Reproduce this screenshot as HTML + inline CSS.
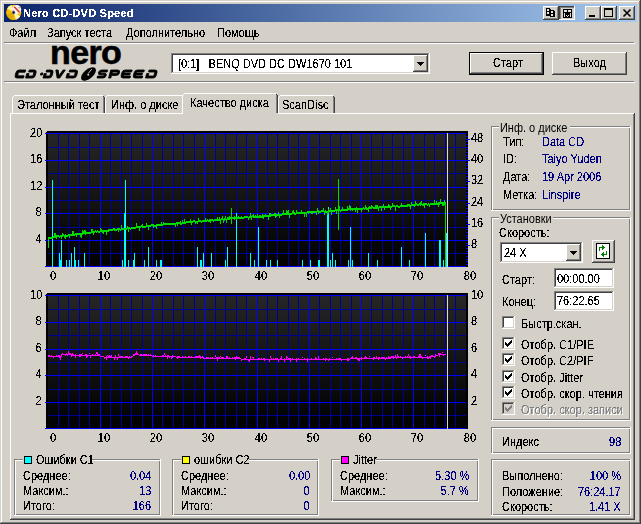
<!DOCTYPE html><html><head><meta charset="utf-8"><style>
html,body{margin:0;padding:0;}
body{width:641px;height:524px;position:relative;overflow:hidden;background:#D4D0C8;font-family:"Liberation Sans", sans-serif;}
div{position:absolute;}
.t{font-size:12px;line-height:13px;white-space:nowrap;color:#000;transform:scaleX(0.917);transform-origin:0 0;}
.r{transform-origin:100% 0;}
.c{transform-origin:50% 0;}
.n{font-size:11px;transform:none;}
.t{filter:url(#crisp);}
svg{position:absolute;left:0;top:0;}
</style></head><body>
<svg width="0" height="0" style="position:absolute;left:0;top:0"><filter id="crisp" x="0" y="0" width="100%" height="100%"><feComponentTransfer><feFuncA type="discrete" tableValues="0 0 1 1 1"/></feComponentTransfer></filter></svg>
<div style="position:absolute;left:1px;top:1px;width:639px;height:1px;background:#FFFFFF"></div>
<div style="position:absolute;left:1px;top:1px;width:1px;height:522px;background:#FFFFFF"></div>
<div style="position:absolute;left:0px;top:523px;width:641px;height:1px;background:#404040"></div>
<div style="position:absolute;left:640px;top:0px;width:1px;height:524px;background:#404040"></div>
<div style="position:absolute;left:1px;top:522px;width:639px;height:1px;background:#808080"></div>
<div style="position:absolute;left:639px;top:1px;width:1px;height:522px;background:#808080"></div>
<div style="position:absolute;left:4px;top:4px;width:633px;height:18px;background:linear-gradient(to right,#0A246A,#A6CAF0)"></div>
<div class="t n" style="left:23px;top:7px;color:#FFFFFF;font-weight:bold;letter-spacing:0.22px;">Nero CD-DVD Speed</div>
<div class="t" style="left:8.5px;top:27px;color:#000;">Файл</div>
<div class="t" style="left:46.5px;top:27px;color:#000;">Запуск теста</div>
<div class="t" style="left:126px;top:27px;color:#000;">Дополнительно</div>
<div class="t" style="left:217px;top:27px;color:#000;">Помощь</div>
<div style="position:absolute;left:4px;top:42px;width:630px;height:1px;background:#808080"></div>
<div style="position:absolute;left:5px;top:43px;width:630px;height:1px;background:#FFFFFF"></div>
<div style="position:absolute;left:4px;top:81px;width:630px;height:1px;background:#808080"></div>
<div style="position:absolute;left:5px;top:82px;width:630px;height:1px;background:#FFFFFF"></div>
<div style="position:absolute;left:171px;top:53px;width:259px;height:21px;background:#FFFFFF"></div>
<div style="position:absolute;left:171px;top:53px;width:259px;height:1px;background:#808080"></div>
<div style="position:absolute;left:171px;top:53px;width:1px;height:21px;background:#808080"></div>
<div style="position:absolute;left:171px;top:73px;width:259px;height:1px;background:#FFFFFF"></div>
<div style="position:absolute;left:429px;top:53px;width:1px;height:21px;background:#FFFFFF"></div>
<div style="position:absolute;left:172px;top:54px;width:257px;height:1px;background:#404040"></div>
<div style="position:absolute;left:172px;top:54px;width:1px;height:19px;background:#404040"></div>
<div style="position:absolute;left:172px;top:72px;width:257px;height:1px;background:#D4D0C8"></div>
<div style="position:absolute;left:428px;top:54px;width:1px;height:19px;background:#D4D0C8"></div>
<div class="t" style="left:178px;top:58px;color:#000;">[0:1]&nbsp;&nbsp;&nbsp;BENQ DVD DC DW1670 101</div>
<div style="position:absolute;left:413px;top:55px;width:15px;height:17px;background:#D4D0C8"></div>
<div style="position:absolute;left:413px;top:55px;width:15px;height:1px;background:#FFFFFF"></div>
<div style="position:absolute;left:413px;top:55px;width:1px;height:17px;background:#FFFFFF"></div>
<div style="position:absolute;left:413px;top:71px;width:15px;height:1px;background:#404040"></div>
<div style="position:absolute;left:427px;top:55px;width:1px;height:17px;background:#404040"></div>
<div style="position:absolute;left:414px;top:70px;width:13px;height:1px;background:#808080"></div>
<div style="position:absolute;left:426px;top:56px;width:1px;height:15px;background:#808080"></div>
<div style="position:absolute;left:469px;top:52px;width:75px;height:23px;background:#000"></div>
<div style="position:absolute;left:470px;top:53px;width:73px;height:21px;background:#D4D0C8"></div>
<div style="position:absolute;left:470px;top:53px;width:73px;height:1px;background:#FFFFFF"></div>
<div style="position:absolute;left:470px;top:53px;width:1px;height:21px;background:#FFFFFF"></div>
<div style="position:absolute;left:470px;top:73px;width:73px;height:1px;background:#404040"></div>
<div style="position:absolute;left:542px;top:53px;width:1px;height:21px;background:#404040"></div>
<div style="position:absolute;left:471px;top:72px;width:71px;height:1px;background:#808080"></div>
<div style="position:absolute;left:541px;top:54px;width:1px;height:19px;background:#808080"></div>
<div class="t" style="left:493px;top:57px;color:#000;">Старт</div>
<div style="position:absolute;left:552px;top:52px;width:75px;height:23px;background:#D4D0C8"></div>
<div style="position:absolute;left:552px;top:52px;width:75px;height:1px;background:#FFFFFF"></div>
<div style="position:absolute;left:552px;top:52px;width:1px;height:23px;background:#FFFFFF"></div>
<div style="position:absolute;left:552px;top:74px;width:75px;height:1px;background:#404040"></div>
<div style="position:absolute;left:626px;top:52px;width:1px;height:23px;background:#404040"></div>
<div style="position:absolute;left:553px;top:73px;width:73px;height:1px;background:#808080"></div>
<div style="position:absolute;left:625px;top:53px;width:1px;height:21px;background:#808080"></div>
<div class="t" style="left:573px;top:57px;color:#000;">Выход</div>
<div style="position:absolute;left:10px;top:113px;width:624px;height:1px;background:#FFFFFF"></div>
<div style="position:absolute;left:10px;top:113px;width:1px;height:406px;background:#FFFFFF"></div>
<div style="position:absolute;left:10px;top:519px;width:625px;height:1px;background:#404040"></div>
<div style="position:absolute;left:634px;top:113px;width:1px;height:407px;background:#404040"></div>
<div style="position:absolute;left:11px;top:518px;width:623px;height:1px;background:#808080"></div>
<div style="position:absolute;left:633px;top:114px;width:1px;height:405px;background:#808080"></div>
<div style="position:absolute;left:12px;top:95px;width:93px;height:18px;background:#D4D0C8"></div>
<div style="position:absolute;left:12px;top:97px;width:1px;height:17px;background:#FFFFFF"></div>
<div style="position:absolute;left:14px;top:95px;width:89px;height:1px;background:#FFFFFF"></div>
<div style="position:absolute;left:13px;top:96px;width:1px;height:1px;background:#FFFFFF"></div>
<div style="position:absolute;left:103px;top:96px;width:1px;height:17px;background:#808080"></div>
<div style="position:absolute;left:104px;top:97px;width:1px;height:16px;background:#404040"></div>
<div style="position:absolute;left:103px;top:96px;width:1px;height:1px;background:#404040"></div>
<div class="t" style="left:17px;top:99px;color:#000;">Эталонный тест</div>
<div style="position:absolute;left:105px;top:95px;width:79px;height:18px;background:#D4D0C8"></div>
<div style="position:absolute;left:105px;top:97px;width:1px;height:17px;background:#FFFFFF"></div>
<div style="position:absolute;left:107px;top:95px;width:75px;height:1px;background:#FFFFFF"></div>
<div style="position:absolute;left:106px;top:96px;width:1px;height:1px;background:#FFFFFF"></div>
<div style="position:absolute;left:182px;top:96px;width:1px;height:17px;background:#808080"></div>
<div style="position:absolute;left:183px;top:97px;width:1px;height:16px;background:#404040"></div>
<div style="position:absolute;left:182px;top:96px;width:1px;height:1px;background:#404040"></div>
<div class="t" style="left:111px;top:99px;color:#000;">Инф. о диске</div>
<div style="position:absolute;left:278px;top:95px;width:57px;height:18px;background:#D4D0C8"></div>
<div style="position:absolute;left:278px;top:97px;width:1px;height:17px;background:#FFFFFF"></div>
<div style="position:absolute;left:280px;top:95px;width:53px;height:1px;background:#FFFFFF"></div>
<div style="position:absolute;left:279px;top:96px;width:1px;height:1px;background:#FFFFFF"></div>
<div style="position:absolute;left:333px;top:96px;width:1px;height:17px;background:#808080"></div>
<div style="position:absolute;left:334px;top:97px;width:1px;height:16px;background:#404040"></div>
<div style="position:absolute;left:333px;top:96px;width:1px;height:1px;background:#404040"></div>
<div class="t" style="left:282px;top:99px;color:#000;">ScanDisc</div>
<div style="position:absolute;left:182px;top:93px;width:96px;height:21px;background:#D4D0C8"></div>
<div style="position:absolute;left:182px;top:95px;width:1px;height:19px;background:#FFFFFF"></div>
<div style="position:absolute;left:184px;top:93px;width:92px;height:1px;background:#FFFFFF"></div>
<div style="position:absolute;left:183px;top:94px;width:1px;height:1px;background:#FFFFFF"></div>
<div style="position:absolute;left:276px;top:94px;width:1px;height:19px;background:#808080"></div>
<div style="position:absolute;left:277px;top:95px;width:1px;height:18px;background:#404040"></div>
<div style="position:absolute;left:276px;top:94px;width:1px;height:1px;background:#404040"></div>
<div class="t" style="left:190px;top:97px;color:#000;">Качество диска</div>
<div style="position:absolute;left:183px;top:113px;width:94px;height:1px;background:#D4D0C8"></div>
<div class="t c" style="left:23.0px;width:60px;text-align:center;top:270px">0</div>
<div class="t c" style="left:73.5px;width:60px;text-align:center;top:270px">10</div>
<div class="t c" style="left:125.5px;width:60px;text-align:center;top:270px">20</div>
<div class="t c" style="left:177.5px;width:60px;text-align:center;top:270px">30</div>
<div class="t c" style="left:230.5px;width:60px;text-align:center;top:270px">40</div>
<div class="t c" style="left:282.5px;width:60px;text-align:center;top:270px">50</div>
<div class="t c" style="left:334.5px;width:60px;text-align:center;top:270px">60</div>
<div class="t c" style="left:386.5px;width:60px;text-align:center;top:270px">70</div>
<div class="t c" style="left:439.5px;width:60px;text-align:center;top:270px">80</div>
<div class="t r" style="right:599px;top:127px;color:#000;text-align:right;">20</div>
<div class="t r" style="right:599px;top:153px;color:#000;text-align:right;">16</div>
<div class="t r" style="right:599px;top:180px;color:#000;text-align:right;">12</div>
<div class="t r" style="right:599px;top:206px;color:#000;text-align:right;">8</div>
<div class="t r" style="right:599px;top:233px;color:#000;text-align:right;">4</div>
<div class="t" style="left:471px;top:238px;color:#000;">8</div>
<div class="t" style="left:471px;top:217px;color:#000;">16</div>
<div class="t" style="left:471px;top:196px;color:#000;">24</div>
<div class="t" style="left:471px;top:174px;color:#000;">32</div>
<div class="t" style="left:471px;top:153px;color:#000;">40</div>
<div class="t" style="left:471px;top:132px;color:#000;">48</div>
<div class="t c" style="left:23.0px;width:60px;text-align:center;top:432px">0</div>
<div class="t c" style="left:73.5px;width:60px;text-align:center;top:432px">10</div>
<div class="t c" style="left:125.5px;width:60px;text-align:center;top:432px">20</div>
<div class="t c" style="left:177.5px;width:60px;text-align:center;top:432px">30</div>
<div class="t c" style="left:230.5px;width:60px;text-align:center;top:432px">40</div>
<div class="t c" style="left:282.5px;width:60px;text-align:center;top:432px">50</div>
<div class="t c" style="left:334.5px;width:60px;text-align:center;top:432px">60</div>
<div class="t c" style="left:386.5px;width:60px;text-align:center;top:432px">70</div>
<div class="t c" style="left:439.5px;width:60px;text-align:center;top:432px">80</div>
<div class="t r" style="right:599px;top:289px;color:#000;text-align:right;">10</div>
<div class="t" style="left:471px;top:289px;color:#000;">10</div>
<div class="t r" style="right:599px;top:315px;color:#000;text-align:right;">8</div>
<div class="t" style="left:471px;top:315px;color:#000;">8</div>
<div class="t r" style="right:599px;top:342px;color:#000;text-align:right;">6</div>
<div class="t" style="left:471px;top:342px;color:#000;">6</div>
<div class="t r" style="right:599px;top:368px;color:#000;text-align:right;">4</div>
<div class="t" style="left:471px;top:368px;color:#000;">4</div>
<div class="t r" style="right:599px;top:395px;color:#000;text-align:right;">2</div>
<div class="t" style="left:471px;top:395px;color:#000;">2</div>
<svg width="641" height="524" shape-rendering="crispEdges" style="z-index:0"><rect x="46" y="131" width="422" height="136" fill="#000"/><rect x="46" y="131" width="1" height="1" fill="#D4D0C8"/><defs><linearGradient id="g1" x1="0" y1="0" x2="0" y2="1"><stop offset="0" stop-color="#262626"/><stop offset="1" stop-color="#000"/></linearGradient></defs><rect x="48" y="133" width="418" height="134" fill="url(#g1)"/><rect x="58" y="133" width="1" height="134" fill="#000096"/><rect x="68" y="133" width="1" height="134" fill="#000096"/><rect x="79" y="133" width="1" height="134" fill="#000096"/><rect x="89" y="133" width="1" height="134" fill="#000096"/><rect x="100" y="133" width="1" height="134" fill="#0000FF"/><rect x="110" y="133" width="1" height="134" fill="#000096"/><rect x="121" y="133" width="1" height="134" fill="#000096"/><rect x="131" y="133" width="1" height="134" fill="#000096"/><rect x="142" y="133" width="1" height="134" fill="#000096"/><rect x="152" y="133" width="1" height="134" fill="#0000FF"/><rect x="162" y="133" width="1" height="134" fill="#000096"/><rect x="173" y="133" width="1" height="134" fill="#000096"/><rect x="183" y="133" width="1" height="134" fill="#000096"/><rect x="194" y="133" width="1" height="134" fill="#000096"/><rect x="204" y="133" width="1" height="134" fill="#0000FF"/><rect x="215" y="133" width="1" height="134" fill="#000096"/><rect x="225" y="133" width="1" height="134" fill="#000096"/><rect x="236" y="133" width="1" height="134" fill="#000096"/><rect x="246" y="133" width="1" height="134" fill="#000096"/><rect x="257" y="133" width="1" height="134" fill="#0000FF"/><rect x="267" y="133" width="1" height="134" fill="#000096"/><rect x="277" y="133" width="1" height="134" fill="#000096"/><rect x="288" y="133" width="1" height="134" fill="#000096"/><rect x="298" y="133" width="1" height="134" fill="#000096"/><rect x="309" y="133" width="1" height="134" fill="#0000FF"/><rect x="319" y="133" width="1" height="134" fill="#000096"/><rect x="330" y="133" width="1" height="134" fill="#000096"/><rect x="340" y="133" width="1" height="134" fill="#000096"/><rect x="351" y="133" width="1" height="134" fill="#000096"/><rect x="361" y="133" width="1" height="134" fill="#0000FF"/><rect x="371" y="133" width="1" height="134" fill="#000096"/><rect x="382" y="133" width="1" height="134" fill="#000096"/><rect x="392" y="133" width="1" height="134" fill="#000096"/><rect x="403" y="133" width="1" height="134" fill="#000096"/><rect x="413" y="133" width="1" height="134" fill="#0000FF"/><rect x="424" y="133" width="1" height="134" fill="#000096"/><rect x="434" y="133" width="1" height="134" fill="#000096"/><rect x="445" y="133" width="1" height="134" fill="#000096"/><rect x="455" y="133" width="1" height="134" fill="#000096"/><rect x="45" y="266" width="421" height="1" fill="#0000FF"/><rect x="48" y="253" width="418" height="1" fill="#000096"/><rect x="45" y="240" width="421" height="1" fill="#0000FF"/><rect x="48" y="227" width="418" height="1" fill="#000096"/><rect x="45" y="213" width="421" height="1" fill="#0000FF"/><rect x="48" y="200" width="418" height="1" fill="#000096"/><rect x="45" y="187" width="421" height="1" fill="#0000FF"/><rect x="48" y="173" width="418" height="1" fill="#000096"/><rect x="45" y="160" width="421" height="1" fill="#0000FF"/><rect x="48" y="147" width="418" height="1" fill="#000096"/><rect x="45" y="133" width="421" height="1" fill="#0000FF"/><rect x="466" y="264" width="2" height="1" fill="#0000FF"/><rect x="466" y="261" width="2" height="1" fill="#0000FF"/><rect x="466" y="259" width="2" height="1" fill="#0000FF"/><rect x="466" y="256" width="2" height="1" fill="#0000FF"/><rect x="466" y="253" width="2" height="1" fill="#0000FF"/><rect x="466" y="251" width="2" height="1" fill="#0000FF"/><rect x="466" y="248" width="2" height="1" fill="#0000FF"/><rect x="466" y="245" width="4" height="1" fill="#0000FF"/><rect x="466" y="243" width="2" height="1" fill="#0000FF"/><rect x="466" y="240" width="2" height="1" fill="#0000FF"/><rect x="466" y="237" width="2" height="1" fill="#0000FF"/><rect x="466" y="235" width="2" height="1" fill="#0000FF"/><rect x="466" y="232" width="2" height="1" fill="#0000FF"/><rect x="466" y="229" width="2" height="1" fill="#0000FF"/><rect x="466" y="227" width="2" height="1" fill="#0000FF"/><rect x="466" y="224" width="4" height="1" fill="#0000FF"/><rect x="466" y="221" width="2" height="1" fill="#0000FF"/><rect x="466" y="219" width="2" height="1" fill="#0000FF"/><rect x="466" y="216" width="2" height="1" fill="#0000FF"/><rect x="466" y="213" width="2" height="1" fill="#0000FF"/><rect x="466" y="211" width="2" height="1" fill="#0000FF"/><rect x="466" y="208" width="2" height="1" fill="#0000FF"/><rect x="466" y="205" width="2" height="1" fill="#0000FF"/><rect x="466" y="203" width="4" height="1" fill="#0000FF"/><rect x="466" y="200" width="2" height="1" fill="#0000FF"/><rect x="466" y="197" width="2" height="1" fill="#0000FF"/><rect x="466" y="195" width="2" height="1" fill="#0000FF"/><rect x="466" y="192" width="2" height="1" fill="#0000FF"/><rect x="466" y="189" width="2" height="1" fill="#0000FF"/><rect x="466" y="187" width="2" height="1" fill="#0000FF"/><rect x="466" y="184" width="2" height="1" fill="#0000FF"/><rect x="466" y="181" width="4" height="1" fill="#0000FF"/><rect x="466" y="179" width="2" height="1" fill="#0000FF"/><rect x="466" y="176" width="2" height="1" fill="#0000FF"/><rect x="466" y="173" width="2" height="1" fill="#0000FF"/><rect x="466" y="171" width="2" height="1" fill="#0000FF"/><rect x="466" y="168" width="2" height="1" fill="#0000FF"/><rect x="466" y="165" width="2" height="1" fill="#0000FF"/><rect x="466" y="163" width="2" height="1" fill="#0000FF"/><rect x="466" y="160" width="4" height="1" fill="#0000FF"/><rect x="466" y="157" width="2" height="1" fill="#0000FF"/><rect x="466" y="155" width="2" height="1" fill="#0000FF"/><rect x="466" y="152" width="2" height="1" fill="#0000FF"/><rect x="466" y="149" width="2" height="1" fill="#0000FF"/><rect x="466" y="147" width="2" height="1" fill="#0000FF"/><rect x="466" y="144" width="2" height="1" fill="#0000FF"/><rect x="466" y="141" width="2" height="1" fill="#0000FF"/><rect x="466" y="139" width="4" height="1" fill="#0000FF"/><rect x="466" y="136" width="2" height="1" fill="#0000FF"/><rect x="52" y="180" width="1" height="87" fill="#00FFFF"/><rect x="59" y="253" width="1" height="14" fill="#00FFFF"/><rect x="60" y="260" width="1" height="7" fill="#00FFFF"/><rect x="61" y="240" width="1" height="27" fill="#00FFFF"/><rect x="66" y="260" width="1" height="7" fill="#00FFFF"/><rect x="69" y="260" width="1" height="7" fill="#00FFFF"/><rect x="71" y="253" width="1" height="14" fill="#00FFFF"/><rect x="74" y="247" width="1" height="20" fill="#00FFFF"/><rect x="75" y="260" width="1" height="7" fill="#00FFFF"/><rect x="78" y="260" width="1" height="7" fill="#00FFFF"/><rect x="84" y="253" width="1" height="14" fill="#00FFFF"/><rect x="122" y="260" width="1" height="7" fill="#00FFFF"/><rect x="124" y="213" width="1" height="54" fill="#00FFFF"/><rect x="125" y="180" width="1" height="87" fill="#00FFFF"/><rect x="128" y="260" width="1" height="7" fill="#00FFFF"/><rect x="133" y="260" width="1" height="7" fill="#00FFFF"/><rect x="134" y="253" width="1" height="14" fill="#00FFFF"/><rect x="144" y="260" width="1" height="7" fill="#00FFFF"/><rect x="148" y="247" width="1" height="20" fill="#00FFFF"/><rect x="156" y="260" width="1" height="7" fill="#00FFFF"/><rect x="160" y="260" width="1" height="7" fill="#00FFFF"/><rect x="161" y="260" width="1" height="7" fill="#00FFFF"/><rect x="197" y="247" width="1" height="20" fill="#00FFFF"/><rect x="200" y="260" width="1" height="7" fill="#00FFFF"/><rect x="201" y="260" width="1" height="7" fill="#00FFFF"/><rect x="203" y="253" width="1" height="14" fill="#00FFFF"/><rect x="211" y="253" width="1" height="14" fill="#00FFFF"/><rect x="225" y="260" width="1" height="7" fill="#00FFFF"/><rect x="227" y="247" width="1" height="20" fill="#00FFFF"/><rect x="236" y="213" width="1" height="54" fill="#00FFFF"/><rect x="250" y="253" width="1" height="14" fill="#00FFFF"/><rect x="254" y="260" width="1" height="7" fill="#00FFFF"/><rect x="258" y="227" width="1" height="40" fill="#00FFFF"/><rect x="266" y="260" width="1" height="7" fill="#00FFFF"/><rect x="270" y="260" width="1" height="7" fill="#00FFFF"/><rect x="277" y="260" width="1" height="7" fill="#00FFFF"/><rect x="302" y="260" width="1" height="7" fill="#00FFFF"/><rect x="310" y="260" width="1" height="7" fill="#00FFFF"/><rect x="318" y="260" width="1" height="7" fill="#00FFFF"/><rect x="319" y="260" width="1" height="7" fill="#00FFFF"/><rect x="327" y="213" width="1" height="54" fill="#00FFFF"/><rect x="328" y="207" width="1" height="60" fill="#00FFFF"/><rect x="330" y="260" width="1" height="7" fill="#00FFFF"/><rect x="332" y="253" width="1" height="14" fill="#00FFFF"/><rect x="335" y="260" width="1" height="7" fill="#00FFFF"/><rect x="348" y="260" width="1" height="7" fill="#00FFFF"/><rect x="350" y="227" width="1" height="40" fill="#00FFFF"/><rect x="352" y="260" width="1" height="7" fill="#00FFFF"/><rect x="368" y="253" width="1" height="14" fill="#00FFFF"/><rect x="377" y="260" width="1" height="7" fill="#00FFFF"/><rect x="401" y="247" width="1" height="20" fill="#00FFFF"/><rect x="409" y="260" width="1" height="7" fill="#00FFFF"/><rect x="425" y="233" width="1" height="34" fill="#00FFFF"/><rect x="439" y="240" width="1" height="27" fill="#00FFFF"/><rect x="440" y="240" width="1" height="27" fill="#00FFFF"/><rect x="443" y="260" width="1" height="7" fill="#00FFFF"/><rect x="446" y="233" width="1" height="34" fill="#00FFFF"/><rect x="49" y="237" width="1" height="2" fill="#00DC00"/><rect x="50" y="237" width="1" height="2" fill="#00DC00"/><rect x="51" y="237" width="1" height="2" fill="#00DC00"/><rect x="52" y="237" width="1" height="2" fill="#00DC00"/><rect x="53" y="236" width="1" height="2" fill="#00DC00"/><rect x="54" y="236" width="1" height="2" fill="#00DC00"/><rect x="54" y="233" width="1" height="3" fill="#00DC00"/><rect x="55" y="236" width="1" height="2" fill="#00DC00"/><rect x="55" y="233" width="1" height="3" fill="#00DC00"/><rect x="56" y="235" width="1" height="2" fill="#00DC00"/><rect x="56" y="237" width="1" height="2" fill="#00DC00"/><rect x="57" y="235" width="1" height="2" fill="#00DC00"/><rect x="58" y="235" width="1" height="2" fill="#00DC00"/><rect x="59" y="236" width="1" height="2" fill="#00DC00"/><rect x="60" y="235" width="1" height="2" fill="#00DC00"/><rect x="61" y="235" width="1" height="2" fill="#00DC00"/><rect x="61" y="237" width="1" height="2" fill="#00DC00"/><rect x="62" y="235" width="1" height="2" fill="#00DC00"/><rect x="62" y="233" width="1" height="2" fill="#00DC00"/><rect x="63" y="234" width="1" height="2" fill="#00DC00"/><rect x="64" y="235" width="1" height="2" fill="#00DC00"/><rect x="64" y="237" width="1" height="1" fill="#00DC00"/><rect x="65" y="234" width="1" height="2" fill="#00DC00"/><rect x="65" y="236" width="1" height="3" fill="#00DC00"/><rect x="66" y="235" width="1" height="2" fill="#00DC00"/><rect x="67" y="235" width="1" height="2" fill="#00DC00"/><rect x="68" y="234" width="1" height="2" fill="#00DC00"/><rect x="69" y="234" width="1" height="2" fill="#00DC00"/><rect x="69" y="236" width="1" height="2" fill="#00DC00"/><rect x="70" y="234" width="1" height="2" fill="#00DC00"/><rect x="71" y="234" width="1" height="2" fill="#00DC00"/><rect x="72" y="234" width="1" height="2" fill="#00DC00"/><rect x="72" y="231" width="1" height="3" fill="#00DC00"/><rect x="73" y="234" width="1" height="2" fill="#00DC00"/><rect x="73" y="231" width="1" height="3" fill="#00DC00"/><rect x="74" y="234" width="1" height="2" fill="#00DC00"/><rect x="75" y="233" width="1" height="2" fill="#00DC00"/><rect x="76" y="233" width="1" height="2" fill="#00DC00"/><rect x="76" y="235" width="1" height="2" fill="#00DC00"/><rect x="77" y="233" width="1" height="2" fill="#00DC00"/><rect x="78" y="233" width="1" height="2" fill="#00DC00"/><rect x="79" y="233" width="1" height="2" fill="#00DC00"/><rect x="80" y="233" width="1" height="2" fill="#00DC00"/><rect x="80" y="235" width="1" height="2" fill="#00DC00"/><rect x="81" y="233" width="1" height="2" fill="#00DC00"/><rect x="81" y="235" width="1" height="3" fill="#00DC00"/><rect x="82" y="233" width="1" height="2" fill="#00DC00"/><rect x="82" y="230" width="1" height="3" fill="#00DC00"/><rect x="83" y="232" width="1" height="2" fill="#00DC00"/><rect x="83" y="231" width="1" height="1" fill="#00DC00"/><rect x="84" y="232" width="1" height="2" fill="#00DC00"/><rect x="84" y="230" width="1" height="2" fill="#00DC00"/><rect x="85" y="233" width="1" height="2" fill="#00DC00"/><rect x="85" y="230" width="1" height="3" fill="#00DC00"/><rect x="86" y="232" width="1" height="2" fill="#00DC00"/><rect x="87" y="232" width="1" height="2" fill="#00DC00"/><rect x="88" y="232" width="1" height="2" fill="#00DC00"/><rect x="89" y="232" width="1" height="2" fill="#00DC00"/><rect x="90" y="232" width="1" height="2" fill="#00DC00"/><rect x="91" y="231" width="1" height="2" fill="#00DC00"/><rect x="91" y="229" width="1" height="2" fill="#00DC00"/><rect x="92" y="231" width="1" height="2" fill="#00DC00"/><rect x="92" y="229" width="1" height="2" fill="#00DC00"/><rect x="93" y="231" width="1" height="2" fill="#00DC00"/><rect x="93" y="233" width="1" height="2" fill="#00DC00"/><rect x="94" y="231" width="1" height="2" fill="#00DC00"/><rect x="95" y="230" width="1" height="2" fill="#00DC00"/><rect x="96" y="231" width="1" height="2" fill="#00DC00"/><rect x="97" y="230" width="1" height="2" fill="#00DC00"/><rect x="98" y="231" width="1" height="2" fill="#00DC00"/><rect x="99" y="231" width="1" height="2" fill="#00DC00"/><rect x="100" y="230" width="1" height="2" fill="#00DC00"/><rect x="100" y="228" width="1" height="2" fill="#00DC00"/><rect x="101" y="230" width="1" height="2" fill="#00DC00"/><rect x="101" y="229" width="1" height="1" fill="#00DC00"/><rect x="102" y="230" width="1" height="2" fill="#00DC00"/><rect x="102" y="232" width="1" height="1" fill="#00DC00"/><rect x="103" y="230" width="1" height="2" fill="#00DC00"/><rect x="103" y="232" width="1" height="2" fill="#00DC00"/><rect x="104" y="230" width="1" height="2" fill="#00DC00"/><rect x="105" y="230" width="1" height="2" fill="#00DC00"/><rect x="106" y="230" width="1" height="2" fill="#00DC00"/><rect x="106" y="232" width="1" height="3" fill="#00DC00"/><rect x="107" y="230" width="1" height="2" fill="#00DC00"/><rect x="108" y="229" width="1" height="2" fill="#00DC00"/><rect x="108" y="231" width="1" height="1" fill="#00DC00"/><rect x="109" y="229" width="1" height="2" fill="#00DC00"/><rect x="110" y="229" width="1" height="2" fill="#00DC00"/><rect x="111" y="229" width="1" height="2" fill="#00DC00"/><rect x="112" y="229" width="1" height="2" fill="#00DC00"/><rect x="113" y="228" width="1" height="2" fill="#00DC00"/><rect x="114" y="228" width="1" height="2" fill="#00DC00"/><rect x="114" y="230" width="1" height="1" fill="#00DC00"/><rect x="115" y="229" width="1" height="2" fill="#00DC00"/><rect x="116" y="229" width="1" height="2" fill="#00DC00"/><rect x="117" y="228" width="1" height="2" fill="#00DC00"/><rect x="118" y="228" width="1" height="2" fill="#00DC00"/><rect x="118" y="230" width="1" height="2" fill="#00DC00"/><rect x="119" y="228" width="1" height="2" fill="#00DC00"/><rect x="120" y="229" width="1" height="2" fill="#00DC00"/><rect x="121" y="228" width="1" height="2" fill="#00DC00"/><rect x="121" y="225" width="1" height="3" fill="#00DC00"/><rect x="122" y="228" width="1" height="2" fill="#00DC00"/><rect x="123" y="228" width="1" height="2" fill="#00DC00"/><rect x="124" y="228" width="1" height="2" fill="#00DC00"/><rect x="125" y="228" width="1" height="2" fill="#00DC00"/><rect x="126" y="228" width="1" height="2" fill="#00DC00"/><rect x="127" y="227" width="1" height="2" fill="#00DC00"/><rect x="127" y="226" width="1" height="1" fill="#00DC00"/><rect x="128" y="227" width="1" height="2" fill="#00DC00"/><rect x="128" y="229" width="1" height="3" fill="#00DC00"/><rect x="129" y="227" width="1" height="2" fill="#00DC00"/><rect x="130" y="228" width="1" height="2" fill="#00DC00"/><rect x="131" y="227" width="1" height="2" fill="#00DC00"/><rect x="132" y="227" width="1" height="2" fill="#00DC00"/><rect x="133" y="227" width="1" height="2" fill="#00DC00"/><rect x="134" y="227" width="1" height="2" fill="#00DC00"/><rect x="135" y="227" width="1" height="2" fill="#00DC00"/><rect x="136" y="226" width="1" height="2" fill="#00DC00"/><rect x="136" y="223" width="1" height="3" fill="#00DC00"/><rect x="137" y="226" width="1" height="2" fill="#00DC00"/><rect x="138" y="226" width="1" height="2" fill="#00DC00"/><rect x="139" y="226" width="1" height="2" fill="#00DC00"/><rect x="139" y="228" width="1" height="3" fill="#00DC00"/><rect x="140" y="226" width="1" height="2" fill="#00DC00"/><rect x="141" y="225" width="1" height="2" fill="#00DC00"/><rect x="142" y="226" width="1" height="2" fill="#00DC00"/><rect x="142" y="224" width="1" height="2" fill="#00DC00"/><rect x="143" y="226" width="1" height="2" fill="#00DC00"/><rect x="144" y="226" width="1" height="2" fill="#00DC00"/><rect x="145" y="226" width="1" height="2" fill="#00DC00"/><rect x="146" y="225" width="1" height="2" fill="#00DC00"/><rect x="146" y="223" width="1" height="2" fill="#00DC00"/><rect x="147" y="225" width="1" height="2" fill="#00DC00"/><rect x="148" y="225" width="1" height="2" fill="#00DC00"/><rect x="148" y="227" width="1" height="3" fill="#00DC00"/><rect x="149" y="225" width="1" height="2" fill="#00DC00"/><rect x="150" y="225" width="1" height="2" fill="#00DC00"/><rect x="151" y="224" width="1" height="2" fill="#00DC00"/><rect x="152" y="224" width="1" height="2" fill="#00DC00"/><rect x="153" y="224" width="1" height="2" fill="#00DC00"/><rect x="153" y="226" width="1" height="2" fill="#00DC00"/><rect x="154" y="225" width="1" height="2" fill="#00DC00"/><rect x="155" y="225" width="1" height="2" fill="#00DC00"/><rect x="156" y="224" width="1" height="2" fill="#00DC00"/><rect x="156" y="226" width="1" height="3" fill="#00DC00"/><rect x="157" y="224" width="1" height="2" fill="#00DC00"/><rect x="158" y="224" width="1" height="2" fill="#00DC00"/><rect x="159" y="224" width="1" height="2" fill="#00DC00"/><rect x="160" y="224" width="1" height="2" fill="#00DC00"/><rect x="161" y="224" width="1" height="2" fill="#00DC00"/><rect x="161" y="222" width="1" height="2" fill="#00DC00"/><rect x="162" y="224" width="1" height="2" fill="#00DC00"/><rect x="163" y="223" width="1" height="2" fill="#00DC00"/><rect x="163" y="222" width="1" height="1" fill="#00DC00"/><rect x="164" y="223" width="1" height="2" fill="#00DC00"/><rect x="165" y="223" width="1" height="2" fill="#00DC00"/><rect x="166" y="223" width="1" height="2" fill="#00DC00"/><rect x="167" y="223" width="1" height="2" fill="#00DC00"/><rect x="168" y="223" width="1" height="2" fill="#00DC00"/><rect x="169" y="223" width="1" height="2" fill="#00DC00"/><rect x="170" y="223" width="1" height="2" fill="#00DC00"/><rect x="171" y="223" width="1" height="2" fill="#00DC00"/><rect x="172" y="223" width="1" height="2" fill="#00DC00"/><rect x="173" y="223" width="1" height="2" fill="#00DC00"/><rect x="174" y="223" width="1" height="2" fill="#00DC00"/><rect x="175" y="223" width="1" height="2" fill="#00DC00"/><rect x="175" y="225" width="1" height="2" fill="#00DC00"/><rect x="176" y="222" width="1" height="2" fill="#00DC00"/><rect x="177" y="222" width="1" height="2" fill="#00DC00"/><rect x="177" y="224" width="1" height="2" fill="#00DC00"/><rect x="178" y="222" width="1" height="2" fill="#00DC00"/><rect x="179" y="222" width="1" height="2" fill="#00DC00"/><rect x="180" y="223" width="1" height="2" fill="#00DC00"/><rect x="180" y="221" width="1" height="2" fill="#00DC00"/><rect x="181" y="223" width="1" height="2" fill="#00DC00"/><rect x="182" y="222" width="1" height="2" fill="#00DC00"/><rect x="182" y="220" width="1" height="2" fill="#00DC00"/><rect x="183" y="222" width="1" height="2" fill="#00DC00"/><rect x="184" y="222" width="1" height="2" fill="#00DC00"/><rect x="184" y="219" width="1" height="3" fill="#00DC00"/><rect x="185" y="222" width="1" height="2" fill="#00DC00"/><rect x="186" y="221" width="1" height="2" fill="#00DC00"/><rect x="187" y="221" width="1" height="2" fill="#00DC00"/><rect x="188" y="221" width="1" height="2" fill="#00DC00"/><rect x="189" y="221" width="1" height="2" fill="#00DC00"/><rect x="190" y="221" width="1" height="2" fill="#00DC00"/><rect x="190" y="219" width="1" height="2" fill="#00DC00"/><rect x="191" y="221" width="1" height="2" fill="#00DC00"/><rect x="191" y="223" width="1" height="2" fill="#00DC00"/><rect x="192" y="221" width="1" height="2" fill="#00DC00"/><rect x="193" y="220" width="1" height="2" fill="#00DC00"/><rect x="194" y="220" width="1" height="2" fill="#00DC00"/><rect x="195" y="221" width="1" height="2" fill="#00DC00"/><rect x="195" y="223" width="1" height="1" fill="#00DC00"/><rect x="196" y="221" width="1" height="2" fill="#00DC00"/><rect x="197" y="221" width="1" height="2" fill="#00DC00"/><rect x="197" y="223" width="1" height="1" fill="#00DC00"/><rect x="198" y="220" width="1" height="2" fill="#00DC00"/><rect x="198" y="218" width="1" height="2" fill="#00DC00"/><rect x="199" y="220" width="1" height="2" fill="#00DC00"/><rect x="200" y="220" width="1" height="2" fill="#00DC00"/><rect x="201" y="221" width="1" height="2" fill="#00DC00"/><rect x="202" y="220" width="1" height="2" fill="#00DC00"/><rect x="203" y="220" width="1" height="2" fill="#00DC00"/><rect x="204" y="220" width="1" height="2" fill="#00DC00"/><rect x="205" y="220" width="1" height="2" fill="#00DC00"/><rect x="205" y="218" width="1" height="2" fill="#00DC00"/><rect x="206" y="220" width="1" height="2" fill="#00DC00"/><rect x="207" y="219" width="1" height="2" fill="#00DC00"/><rect x="208" y="220" width="1" height="2" fill="#00DC00"/><rect x="209" y="219" width="1" height="2" fill="#00DC00"/><rect x="209" y="221" width="1" height="1" fill="#00DC00"/><rect x="210" y="219" width="1" height="2" fill="#00DC00"/><rect x="210" y="221" width="1" height="2" fill="#00DC00"/><rect x="211" y="219" width="1" height="2" fill="#00DC00"/><rect x="212" y="219" width="1" height="2" fill="#00DC00"/><rect x="213" y="220" width="1" height="2" fill="#00DC00"/><rect x="214" y="219" width="1" height="2" fill="#00DC00"/><rect x="215" y="219" width="1" height="2" fill="#00DC00"/><rect x="216" y="219" width="1" height="2" fill="#00DC00"/><rect x="217" y="219" width="1" height="2" fill="#00DC00"/><rect x="217" y="217" width="1" height="2" fill="#00DC00"/><rect x="218" y="219" width="1" height="2" fill="#00DC00"/><rect x="219" y="219" width="1" height="2" fill="#00DC00"/><rect x="219" y="217" width="1" height="2" fill="#00DC00"/><rect x="220" y="219" width="1" height="2" fill="#00DC00"/><rect x="220" y="221" width="1" height="3" fill="#00DC00"/><rect x="221" y="218" width="1" height="2" fill="#00DC00"/><rect x="222" y="218" width="1" height="2" fill="#00DC00"/><rect x="222" y="216" width="1" height="2" fill="#00DC00"/><rect x="223" y="219" width="1" height="2" fill="#00DC00"/><rect x="223" y="221" width="1" height="2" fill="#00DC00"/><rect x="224" y="218" width="1" height="2" fill="#00DC00"/><rect x="224" y="220" width="1" height="1" fill="#00DC00"/><rect x="225" y="218" width="1" height="2" fill="#00DC00"/><rect x="225" y="216" width="1" height="2" fill="#00DC00"/><rect x="226" y="219" width="1" height="2" fill="#00DC00"/><rect x="226" y="221" width="1" height="2" fill="#00DC00"/><rect x="227" y="218" width="1" height="2" fill="#00DC00"/><rect x="227" y="217" width="1" height="1" fill="#00DC00"/><rect x="228" y="218" width="1" height="2" fill="#00DC00"/><rect x="228" y="217" width="1" height="1" fill="#00DC00"/><rect x="229" y="218" width="1" height="2" fill="#00DC00"/><rect x="229" y="216" width="1" height="2" fill="#00DC00"/><rect x="230" y="217" width="1" height="2" fill="#00DC00"/><rect x="231" y="218" width="1" height="2" fill="#00DC00"/><rect x="232" y="217" width="1" height="2" fill="#00DC00"/><rect x="233" y="217" width="1" height="2" fill="#00DC00"/><rect x="234" y="218" width="1" height="2" fill="#00DC00"/><rect x="234" y="216" width="1" height="2" fill="#00DC00"/><rect x="235" y="217" width="1" height="2" fill="#00DC00"/><rect x="236" y="217" width="1" height="2" fill="#00DC00"/><rect x="236" y="219" width="1" height="1" fill="#00DC00"/><rect x="237" y="217" width="1" height="2" fill="#00DC00"/><rect x="238" y="217" width="1" height="2" fill="#00DC00"/><rect x="238" y="216" width="1" height="1" fill="#00DC00"/><rect x="239" y="217" width="1" height="2" fill="#00DC00"/><rect x="240" y="217" width="1" height="2" fill="#00DC00"/><rect x="241" y="216" width="1" height="2" fill="#00DC00"/><rect x="241" y="218" width="1" height="1" fill="#00DC00"/><rect x="242" y="217" width="1" height="2" fill="#00DC00"/><rect x="243" y="217" width="1" height="2" fill="#00DC00"/><rect x="244" y="216" width="1" height="2" fill="#00DC00"/><rect x="245" y="216" width="1" height="2" fill="#00DC00"/><rect x="246" y="216" width="1" height="2" fill="#00DC00"/><rect x="247" y="216" width="1" height="2" fill="#00DC00"/><rect x="248" y="217" width="1" height="2" fill="#00DC00"/><rect x="248" y="219" width="1" height="1" fill="#00DC00"/><rect x="249" y="216" width="1" height="2" fill="#00DC00"/><rect x="250" y="216" width="1" height="2" fill="#00DC00"/><rect x="250" y="213" width="1" height="3" fill="#00DC00"/><rect x="251" y="216" width="1" height="2" fill="#00DC00"/><rect x="251" y="218" width="1" height="2" fill="#00DC00"/><rect x="252" y="215" width="1" height="2" fill="#00DC00"/><rect x="253" y="216" width="1" height="2" fill="#00DC00"/><rect x="253" y="214" width="1" height="2" fill="#00DC00"/><rect x="254" y="216" width="1" height="2" fill="#00DC00"/><rect x="255" y="216" width="1" height="2" fill="#00DC00"/><rect x="255" y="215" width="1" height="1" fill="#00DC00"/><rect x="256" y="216" width="1" height="2" fill="#00DC00"/><rect x="257" y="216" width="1" height="2" fill="#00DC00"/><rect x="257" y="214" width="1" height="2" fill="#00DC00"/><rect x="258" y="216" width="1" height="2" fill="#00DC00"/><rect x="259" y="215" width="1" height="2" fill="#00DC00"/><rect x="259" y="217" width="1" height="1" fill="#00DC00"/><rect x="260" y="215" width="1" height="2" fill="#00DC00"/><rect x="260" y="217" width="1" height="1" fill="#00DC00"/><rect x="261" y="216" width="1" height="2" fill="#00DC00"/><rect x="262" y="216" width="1" height="2" fill="#00DC00"/><rect x="262" y="214" width="1" height="2" fill="#00DC00"/><rect x="263" y="215" width="1" height="2" fill="#00DC00"/><rect x="263" y="217" width="1" height="2" fill="#00DC00"/><rect x="264" y="215" width="1" height="2" fill="#00DC00"/><rect x="265" y="214" width="1" height="2" fill="#00DC00"/><rect x="265" y="216" width="1" height="1" fill="#00DC00"/><rect x="266" y="215" width="1" height="2" fill="#00DC00"/><rect x="267" y="215" width="1" height="2" fill="#00DC00"/><rect x="268" y="215" width="1" height="2" fill="#00DC00"/><rect x="268" y="217" width="1" height="3" fill="#00DC00"/><rect x="269" y="215" width="1" height="2" fill="#00DC00"/><rect x="269" y="213" width="1" height="2" fill="#00DC00"/><rect x="270" y="215" width="1" height="2" fill="#00DC00"/><rect x="270" y="213" width="1" height="2" fill="#00DC00"/><rect x="271" y="214" width="1" height="2" fill="#00DC00"/><rect x="272" y="214" width="1" height="2" fill="#00DC00"/><rect x="273" y="214" width="1" height="2" fill="#00DC00"/><rect x="274" y="214" width="1" height="2" fill="#00DC00"/><rect x="274" y="213" width="1" height="1" fill="#00DC00"/><rect x="275" y="213" width="1" height="2" fill="#00DC00"/><rect x="275" y="215" width="1" height="3" fill="#00DC00"/><rect x="276" y="214" width="1" height="2" fill="#00DC00"/><rect x="276" y="216" width="1" height="1" fill="#00DC00"/><rect x="277" y="214" width="1" height="2" fill="#00DC00"/><rect x="278" y="214" width="1" height="2" fill="#00DC00"/><rect x="278" y="212" width="1" height="2" fill="#00DC00"/><rect x="279" y="214" width="1" height="2" fill="#00DC00"/><rect x="279" y="216" width="1" height="2" fill="#00DC00"/><rect x="280" y="214" width="1" height="2" fill="#00DC00"/><rect x="281" y="214" width="1" height="2" fill="#00DC00"/><rect x="282" y="213" width="1" height="2" fill="#00DC00"/><rect x="283" y="213" width="1" height="2" fill="#00DC00"/><rect x="283" y="210" width="1" height="3" fill="#00DC00"/><rect x="284" y="213" width="1" height="2" fill="#00DC00"/><rect x="285" y="213" width="1" height="2" fill="#00DC00"/><rect x="286" y="213" width="1" height="2" fill="#00DC00"/><rect x="286" y="210" width="1" height="3" fill="#00DC00"/><rect x="287" y="213" width="1" height="2" fill="#00DC00"/><rect x="287" y="211" width="1" height="2" fill="#00DC00"/><rect x="288" y="213" width="1" height="2" fill="#00DC00"/><rect x="288" y="210" width="1" height="3" fill="#00DC00"/><rect x="289" y="213" width="1" height="2" fill="#00DC00"/><rect x="289" y="215" width="1" height="3" fill="#00DC00"/><rect x="290" y="213" width="1" height="2" fill="#00DC00"/><rect x="291" y="213" width="1" height="2" fill="#00DC00"/><rect x="292" y="212" width="1" height="2" fill="#00DC00"/><rect x="292" y="211" width="1" height="1" fill="#00DC00"/><rect x="293" y="212" width="1" height="2" fill="#00DC00"/><rect x="293" y="210" width="1" height="2" fill="#00DC00"/><rect x="294" y="212" width="1" height="2" fill="#00DC00"/><rect x="294" y="214" width="1" height="1" fill="#00DC00"/><rect x="295" y="213" width="1" height="2" fill="#00DC00"/><rect x="296" y="212" width="1" height="2" fill="#00DC00"/><rect x="296" y="210" width="1" height="2" fill="#00DC00"/><rect x="297" y="212" width="1" height="2" fill="#00DC00"/><rect x="298" y="212" width="1" height="2" fill="#00DC00"/><rect x="299" y="212" width="1" height="2" fill="#00DC00"/><rect x="300" y="212" width="1" height="2" fill="#00DC00"/><rect x="301" y="212" width="1" height="2" fill="#00DC00"/><rect x="301" y="210" width="1" height="2" fill="#00DC00"/><rect x="302" y="212" width="1" height="2" fill="#00DC00"/><rect x="303" y="212" width="1" height="2" fill="#00DC00"/><rect x="304" y="212" width="1" height="2" fill="#00DC00"/><rect x="304" y="214" width="1" height="3" fill="#00DC00"/><rect x="305" y="212" width="1" height="2" fill="#00DC00"/><rect x="306" y="212" width="1" height="2" fill="#00DC00"/><rect x="306" y="214" width="1" height="3" fill="#00DC00"/><rect x="307" y="211" width="1" height="2" fill="#00DC00"/><rect x="308" y="212" width="1" height="2" fill="#00DC00"/><rect x="308" y="211" width="1" height="1" fill="#00DC00"/><rect x="309" y="211" width="1" height="2" fill="#00DC00"/><rect x="310" y="211" width="1" height="2" fill="#00DC00"/><rect x="311" y="212" width="1" height="2" fill="#00DC00"/><rect x="311" y="211" width="1" height="1" fill="#00DC00"/><rect x="312" y="211" width="1" height="2" fill="#00DC00"/><rect x="312" y="213" width="1" height="1" fill="#00DC00"/><rect x="313" y="211" width="1" height="2" fill="#00DC00"/><rect x="314" y="211" width="1" height="2" fill="#00DC00"/><rect x="315" y="211" width="1" height="2" fill="#00DC00"/><rect x="316" y="211" width="1" height="2" fill="#00DC00"/><rect x="316" y="213" width="1" height="2" fill="#00DC00"/><rect x="317" y="210" width="1" height="2" fill="#00DC00"/><rect x="317" y="208" width="1" height="2" fill="#00DC00"/><rect x="318" y="210" width="1" height="2" fill="#00DC00"/><rect x="318" y="212" width="1" height="2" fill="#00DC00"/><rect x="319" y="211" width="1" height="2" fill="#00DC00"/><rect x="320" y="211" width="1" height="2" fill="#00DC00"/><rect x="321" y="210" width="1" height="2" fill="#00DC00"/><rect x="322" y="210" width="1" height="2" fill="#00DC00"/><rect x="323" y="210" width="1" height="2" fill="#00DC00"/><rect x="323" y="208" width="1" height="2" fill="#00DC00"/><rect x="324" y="211" width="1" height="2" fill="#00DC00"/><rect x="324" y="213" width="1" height="2" fill="#00DC00"/><rect x="325" y="210" width="1" height="2" fill="#00DC00"/><rect x="325" y="212" width="1" height="1" fill="#00DC00"/><rect x="326" y="211" width="1" height="2" fill="#00DC00"/><rect x="327" y="211" width="1" height="2" fill="#00DC00"/><rect x="327" y="213" width="1" height="2" fill="#00DC00"/><rect x="328" y="209" width="1" height="2" fill="#00DC00"/><rect x="328" y="211" width="1" height="3" fill="#00DC00"/><rect x="328" y="209" width="1" height="3" fill="#00DC00"/><rect x="329" y="210" width="1" height="2" fill="#00DC00"/><rect x="330" y="210" width="1" height="2" fill="#00DC00"/><rect x="330" y="208" width="1" height="2" fill="#00DC00"/><rect x="331" y="210" width="1" height="2" fill="#00DC00"/><rect x="331" y="212" width="1" height="3" fill="#00DC00"/><rect x="332" y="210" width="1" height="2" fill="#00DC00"/><rect x="333" y="210" width="1" height="2" fill="#00DC00"/><rect x="334" y="210" width="1" height="2" fill="#00DC00"/><rect x="335" y="209" width="1" height="2" fill="#00DC00"/><rect x="335" y="207" width="1" height="2" fill="#00DC00"/><rect x="336" y="209" width="1" height="2" fill="#00DC00"/><rect x="336" y="211" width="1" height="3" fill="#00DC00"/><rect x="337" y="209" width="1" height="2" fill="#00DC00"/><rect x="338" y="209" width="1" height="2" fill="#00DC00"/><rect x="339" y="209" width="1" height="2" fill="#00DC00"/><rect x="339" y="206" width="1" height="3" fill="#00DC00"/><rect x="340" y="210" width="1" height="2" fill="#00DC00"/><rect x="341" y="209" width="1" height="2" fill="#00DC00"/><rect x="342" y="209" width="1" height="2" fill="#00DC00"/><rect x="342" y="207" width="1" height="2" fill="#00DC00"/><rect x="343" y="209" width="1" height="2" fill="#00DC00"/><rect x="344" y="209" width="1" height="2" fill="#00DC00"/><rect x="345" y="209" width="1" height="2" fill="#00DC00"/><rect x="346" y="209" width="1" height="2" fill="#00DC00"/><rect x="347" y="209" width="1" height="2" fill="#00DC00"/><rect x="347" y="206" width="1" height="3" fill="#00DC00"/><rect x="348" y="208" width="1" height="2" fill="#00DC00"/><rect x="349" y="208" width="1" height="2" fill="#00DC00"/><rect x="349" y="205" width="1" height="3" fill="#00DC00"/><rect x="350" y="209" width="1" height="2" fill="#00DC00"/><rect x="350" y="206" width="1" height="3" fill="#00DC00"/><rect x="351" y="208" width="1" height="2" fill="#00DC00"/><rect x="352" y="208" width="1" height="2" fill="#00DC00"/><rect x="352" y="210" width="1" height="1" fill="#00DC00"/><rect x="353" y="208" width="1" height="2" fill="#00DC00"/><rect x="354" y="208" width="1" height="2" fill="#00DC00"/><rect x="355" y="208" width="1" height="2" fill="#00DC00"/><rect x="355" y="210" width="1" height="2" fill="#00DC00"/><rect x="356" y="208" width="1" height="2" fill="#00DC00"/><rect x="356" y="207" width="1" height="1" fill="#00DC00"/><rect x="357" y="208" width="1" height="2" fill="#00DC00"/><rect x="357" y="210" width="1" height="3" fill="#00DC00"/><rect x="358" y="208" width="1" height="2" fill="#00DC00"/><rect x="359" y="208" width="1" height="2" fill="#00DC00"/><rect x="360" y="208" width="1" height="2" fill="#00DC00"/><rect x="361" y="208" width="1" height="2" fill="#00DC00"/><rect x="361" y="210" width="1" height="2" fill="#00DC00"/><rect x="362" y="208" width="1" height="2" fill="#00DC00"/><rect x="363" y="207" width="1" height="2" fill="#00DC00"/><rect x="364" y="208" width="1" height="2" fill="#00DC00"/><rect x="365" y="207" width="1" height="2" fill="#00DC00"/><rect x="365" y="205" width="1" height="2" fill="#00DC00"/><rect x="366" y="207" width="1" height="2" fill="#00DC00"/><rect x="366" y="209" width="1" height="1" fill="#00DC00"/><rect x="367" y="208" width="1" height="2" fill="#00DC00"/><rect x="368" y="207" width="1" height="2" fill="#00DC00"/><rect x="368" y="209" width="1" height="3" fill="#00DC00"/><rect x="369" y="207" width="1" height="2" fill="#00DC00"/><rect x="369" y="206" width="1" height="1" fill="#00DC00"/><rect x="370" y="207" width="1" height="2" fill="#00DC00"/><rect x="371" y="207" width="1" height="2" fill="#00DC00"/><rect x="371" y="205" width="1" height="2" fill="#00DC00"/><rect x="372" y="206" width="1" height="2" fill="#00DC00"/><rect x="373" y="207" width="1" height="2" fill="#00DC00"/><rect x="374" y="207" width="1" height="2" fill="#00DC00"/><rect x="375" y="207" width="1" height="2" fill="#00DC00"/><rect x="375" y="205" width="1" height="2" fill="#00DC00"/><rect x="376" y="207" width="1" height="2" fill="#00DC00"/><rect x="376" y="205" width="1" height="2" fill="#00DC00"/><rect x="377" y="207" width="1" height="2" fill="#00DC00"/><rect x="377" y="205" width="1" height="2" fill="#00DC00"/><rect x="378" y="207" width="1" height="2" fill="#00DC00"/><rect x="378" y="209" width="1" height="2" fill="#00DC00"/><rect x="379" y="206" width="1" height="2" fill="#00DC00"/><rect x="380" y="206" width="1" height="2" fill="#00DC00"/><rect x="381" y="206" width="1" height="2" fill="#00DC00"/><rect x="381" y="208" width="1" height="3" fill="#00DC00"/><rect x="382" y="206" width="1" height="2" fill="#00DC00"/><rect x="383" y="206" width="1" height="2" fill="#00DC00"/><rect x="383" y="204" width="1" height="2" fill="#00DC00"/><rect x="384" y="206" width="1" height="2" fill="#00DC00"/><rect x="384" y="208" width="1" height="2" fill="#00DC00"/><rect x="385" y="206" width="1" height="2" fill="#00DC00"/><rect x="386" y="206" width="1" height="2" fill="#00DC00"/><rect x="387" y="206" width="1" height="2" fill="#00DC00"/><rect x="388" y="206" width="1" height="2" fill="#00DC00"/><rect x="388" y="204" width="1" height="2" fill="#00DC00"/><rect x="389" y="206" width="1" height="2" fill="#00DC00"/><rect x="389" y="205" width="1" height="1" fill="#00DC00"/><rect x="390" y="206" width="1" height="2" fill="#00DC00"/><rect x="390" y="208" width="1" height="2" fill="#00DC00"/><rect x="391" y="206" width="1" height="2" fill="#00DC00"/><rect x="392" y="205" width="1" height="2" fill="#00DC00"/><rect x="392" y="203" width="1" height="2" fill="#00DC00"/><rect x="393" y="205" width="1" height="2" fill="#00DC00"/><rect x="394" y="205" width="1" height="2" fill="#00DC00"/><rect x="395" y="206" width="1" height="2" fill="#00DC00"/><rect x="395" y="208" width="1" height="3" fill="#00DC00"/><rect x="396" y="205" width="1" height="2" fill="#00DC00"/><rect x="397" y="205" width="1" height="2" fill="#00DC00"/><rect x="398" y="206" width="1" height="2" fill="#00DC00"/><rect x="399" y="206" width="1" height="2" fill="#00DC00"/><rect x="400" y="205" width="1" height="2" fill="#00DC00"/><rect x="401" y="205" width="1" height="2" fill="#00DC00"/><rect x="401" y="203" width="1" height="2" fill="#00DC00"/><rect x="402" y="205" width="1" height="2" fill="#00DC00"/><rect x="403" y="205" width="1" height="2" fill="#00DC00"/><rect x="404" y="205" width="1" height="2" fill="#00DC00"/><rect x="405" y="205" width="1" height="2" fill="#00DC00"/><rect x="406" y="205" width="1" height="2" fill="#00DC00"/><rect x="407" y="205" width="1" height="2" fill="#00DC00"/><rect x="407" y="204" width="1" height="1" fill="#00DC00"/><rect x="408" y="204" width="1" height="2" fill="#00DC00"/><rect x="409" y="204" width="1" height="2" fill="#00DC00"/><rect x="409" y="206" width="1" height="1" fill="#00DC00"/><rect x="410" y="205" width="1" height="2" fill="#00DC00"/><rect x="410" y="207" width="1" height="2" fill="#00DC00"/><rect x="411" y="204" width="1" height="2" fill="#00DC00"/><rect x="411" y="202" width="1" height="2" fill="#00DC00"/><rect x="412" y="204" width="1" height="2" fill="#00DC00"/><rect x="413" y="204" width="1" height="2" fill="#00DC00"/><rect x="414" y="204" width="1" height="2" fill="#00DC00"/><rect x="414" y="206" width="1" height="1" fill="#00DC00"/><rect x="415" y="204" width="1" height="2" fill="#00DC00"/><rect x="415" y="201" width="1" height="3" fill="#00DC00"/><rect x="416" y="203" width="1" height="2" fill="#00DC00"/><rect x="417" y="204" width="1" height="2" fill="#00DC00"/><rect x="418" y="204" width="1" height="2" fill="#00DC00"/><rect x="419" y="203" width="1" height="2" fill="#00DC00"/><rect x="420" y="204" width="1" height="2" fill="#00DC00"/><rect x="420" y="202" width="1" height="2" fill="#00DC00"/><rect x="421" y="203" width="1" height="2" fill="#00DC00"/><rect x="421" y="201" width="1" height="2" fill="#00DC00"/><rect x="422" y="204" width="1" height="2" fill="#00DC00"/><rect x="423" y="203" width="1" height="2" fill="#00DC00"/><rect x="423" y="205" width="1" height="1" fill="#00DC00"/><rect x="424" y="203" width="1" height="2" fill="#00DC00"/><rect x="424" y="205" width="1" height="3" fill="#00DC00"/><rect x="425" y="203" width="1" height="2" fill="#00DC00"/><rect x="426" y="203" width="1" height="2" fill="#00DC00"/><rect x="427" y="204" width="1" height="2" fill="#00DC00"/><rect x="428" y="203" width="1" height="2" fill="#00DC00"/><rect x="429" y="204" width="1" height="2" fill="#00DC00"/><rect x="429" y="206" width="1" height="1" fill="#00DC00"/><rect x="430" y="203" width="1" height="2" fill="#00DC00"/><rect x="431" y="203" width="1" height="2" fill="#00DC00"/><rect x="432" y="203" width="1" height="2" fill="#00DC00"/><rect x="433" y="203" width="1" height="2" fill="#00DC00"/><rect x="434" y="203" width="1" height="2" fill="#00DC00"/><rect x="434" y="200" width="1" height="3" fill="#00DC00"/><rect x="435" y="203" width="1" height="2" fill="#00DC00"/><rect x="436" y="203" width="1" height="2" fill="#00DC00"/><rect x="436" y="201" width="1" height="2" fill="#00DC00"/><rect x="437" y="203" width="1" height="2" fill="#00DC00"/><rect x="438" y="202" width="1" height="2" fill="#00DC00"/><rect x="438" y="204" width="1" height="3" fill="#00DC00"/><rect x="439" y="202" width="1" height="2" fill="#00DC00"/><rect x="439" y="204" width="1" height="1" fill="#00DC00"/><rect x="440" y="202" width="1" height="2" fill="#00DC00"/><rect x="440" y="199" width="1" height="3" fill="#00DC00"/><rect x="441" y="202" width="1" height="2" fill="#00DC00"/><rect x="442" y="202" width="1" height="2" fill="#00DC00"/><rect x="442" y="204" width="1" height="2" fill="#00DC00"/><rect x="443" y="202" width="1" height="2" fill="#00DC00"/><rect x="443" y="204" width="1" height="2" fill="#00DC00"/><rect x="444" y="203" width="1" height="2" fill="#00DC00"/><rect x="444" y="200" width="1" height="3" fill="#00DC00"/><rect x="445" y="202" width="1" height="2" fill="#00DC00"/><rect x="48" y="237" width="1" height="11" fill="#00DC00"/><rect x="445" y="203" width="1" height="64" fill="#00DC00"/><rect x="231" y="208" width="1" height="16" fill="#00DC00"/><rect x="338" y="179" width="1" height="51" fill="#00DC00"/><rect x="447" y="133" width="1" height="134" fill="#D8D8D8"/><rect x="46" y="293" width="422" height="136" fill="#000"/><rect x="46" y="293" width="1" height="1" fill="#D4D0C8"/><defs><linearGradient id="g2" x1="0" y1="0" x2="0" y2="1"><stop offset="0" stop-color="#262626"/><stop offset="1" stop-color="#000"/></linearGradient></defs><rect x="48" y="295" width="418" height="134" fill="url(#g2)"/><rect x="58" y="295" width="1" height="134" fill="#000096"/><rect x="68" y="295" width="1" height="134" fill="#000096"/><rect x="79" y="295" width="1" height="134" fill="#000096"/><rect x="89" y="295" width="1" height="134" fill="#000096"/><rect x="100" y="295" width="1" height="134" fill="#0000FF"/><rect x="110" y="295" width="1" height="134" fill="#000096"/><rect x="121" y="295" width="1" height="134" fill="#000096"/><rect x="131" y="295" width="1" height="134" fill="#000096"/><rect x="142" y="295" width="1" height="134" fill="#000096"/><rect x="152" y="295" width="1" height="134" fill="#0000FF"/><rect x="162" y="295" width="1" height="134" fill="#000096"/><rect x="173" y="295" width="1" height="134" fill="#000096"/><rect x="183" y="295" width="1" height="134" fill="#000096"/><rect x="194" y="295" width="1" height="134" fill="#000096"/><rect x="204" y="295" width="1" height="134" fill="#0000FF"/><rect x="215" y="295" width="1" height="134" fill="#000096"/><rect x="225" y="295" width="1" height="134" fill="#000096"/><rect x="236" y="295" width="1" height="134" fill="#000096"/><rect x="246" y="295" width="1" height="134" fill="#000096"/><rect x="257" y="295" width="1" height="134" fill="#0000FF"/><rect x="267" y="295" width="1" height="134" fill="#000096"/><rect x="277" y="295" width="1" height="134" fill="#000096"/><rect x="288" y="295" width="1" height="134" fill="#000096"/><rect x="298" y="295" width="1" height="134" fill="#000096"/><rect x="309" y="295" width="1" height="134" fill="#0000FF"/><rect x="319" y="295" width="1" height="134" fill="#000096"/><rect x="330" y="295" width="1" height="134" fill="#000096"/><rect x="340" y="295" width="1" height="134" fill="#000096"/><rect x="351" y="295" width="1" height="134" fill="#000096"/><rect x="361" y="295" width="1" height="134" fill="#0000FF"/><rect x="371" y="295" width="1" height="134" fill="#000096"/><rect x="382" y="295" width="1" height="134" fill="#000096"/><rect x="392" y="295" width="1" height="134" fill="#000096"/><rect x="403" y="295" width="1" height="134" fill="#000096"/><rect x="413" y="295" width="1" height="134" fill="#0000FF"/><rect x="424" y="295" width="1" height="134" fill="#000096"/><rect x="434" y="295" width="1" height="134" fill="#000096"/><rect x="445" y="295" width="1" height="134" fill="#000096"/><rect x="455" y="295" width="1" height="134" fill="#000096"/><rect x="45" y="428" width="421" height="1" fill="#0000FF"/><rect x="48" y="415" width="418" height="1" fill="#000096"/><rect x="45" y="402" width="421" height="1" fill="#0000FF"/><rect x="48" y="389" width="418" height="1" fill="#000096"/><rect x="45" y="375" width="421" height="1" fill="#0000FF"/><rect x="48" y="362" width="418" height="1" fill="#000096"/><rect x="45" y="349" width="421" height="1" fill="#0000FF"/><rect x="48" y="335" width="418" height="1" fill="#000096"/><rect x="45" y="322" width="421" height="1" fill="#0000FF"/><rect x="48" y="309" width="418" height="1" fill="#000096"/><rect x="45" y="295" width="421" height="1" fill="#0000FF"/><rect x="48" y="355" width="1" height="2" fill="#FF00FF"/><rect x="49" y="355" width="1" height="2" fill="#FF00FF"/><rect x="50" y="356" width="1" height="1" fill="#FF00FF"/><rect x="51" y="355" width="1" height="2" fill="#FF00FF"/><rect x="52" y="356" width="1" height="1" fill="#FF00FF"/><rect x="53" y="356" width="1" height="1" fill="#FF00FF"/><rect x="53" y="357" width="1" height="1" fill="#FF00FF"/><rect x="54" y="356" width="1" height="1" fill="#FF00FF"/><rect x="55" y="356" width="1" height="1" fill="#FF00FF"/><rect x="56" y="355" width="1" height="2" fill="#FF00FF"/><rect x="57" y="356" width="1" height="1" fill="#FF00FF"/><rect x="58" y="355" width="1" height="2" fill="#FF00FF"/><rect x="59" y="355" width="1" height="2" fill="#FF00FF"/><rect x="59" y="357" width="1" height="1" fill="#FF00FF"/><rect x="60" y="356" width="1" height="2" fill="#FF00FF"/><rect x="60" y="358" width="1" height="2" fill="#FF00FF"/><rect x="61" y="354" width="1" height="2" fill="#FF00FF"/><rect x="61" y="354" width="1" height="3" fill="#FF00FF"/><rect x="62" y="353" width="1" height="2" fill="#FF00FF"/><rect x="63" y="354" width="1" height="1" fill="#FF00FF"/><rect x="64" y="354" width="1" height="1" fill="#FF00FF"/><rect x="65" y="354" width="1" height="1" fill="#FF00FF"/><rect x="65" y="355" width="1" height="1" fill="#FF00FF"/><rect x="66" y="353" width="1" height="2" fill="#FF00FF"/><rect x="67" y="354" width="1" height="1" fill="#FF00FF"/><rect x="67" y="355" width="1" height="1" fill="#FF00FF"/><rect x="68" y="353" width="1" height="2" fill="#FF00FF"/><rect x="68" y="351" width="1" height="2" fill="#FF00FF"/><rect x="69" y="353" width="1" height="2" fill="#FF00FF"/><rect x="70" y="353" width="1" height="2" fill="#FF00FF"/><rect x="71" y="354" width="1" height="1" fill="#FF00FF"/><rect x="71" y="355" width="1" height="2" fill="#FF00FF"/><rect x="72" y="353" width="1" height="2" fill="#FF00FF"/><rect x="72" y="355" width="1" height="1" fill="#FF00FF"/><rect x="73" y="354" width="1" height="1" fill="#FF00FF"/><rect x="73" y="355" width="1" height="1" fill="#FF00FF"/><rect x="74" y="355" width="1" height="1" fill="#FF00FF"/><rect x="75" y="354" width="1" height="2" fill="#FF00FF"/><rect x="75" y="356" width="1" height="2" fill="#FF00FF"/><rect x="76" y="355" width="1" height="1" fill="#FF00FF"/><rect x="77" y="355" width="1" height="1" fill="#FF00FF"/><rect x="78" y="355" width="1" height="1" fill="#FF00FF"/><rect x="79" y="354" width="1" height="2" fill="#FF00FF"/><rect x="79" y="356" width="1" height="1" fill="#FF00FF"/><rect x="80" y="354" width="1" height="2" fill="#FF00FF"/><rect x="80" y="356" width="1" height="1" fill="#FF00FF"/><rect x="81" y="354" width="1" height="2" fill="#FF00FF"/><rect x="82" y="355" width="1" height="1" fill="#FF00FF"/><rect x="82" y="353" width="1" height="1" fill="#FF00FF"/><rect x="83" y="355" width="1" height="1" fill="#FF00FF"/><rect x="84" y="355" width="1" height="1" fill="#FF00FF"/><rect x="85" y="354" width="1" height="2" fill="#FF00FF"/><rect x="86" y="354" width="1" height="2" fill="#FF00FF"/><rect x="86" y="356" width="1" height="2" fill="#FF00FF"/><rect x="87" y="355" width="1" height="1" fill="#FF00FF"/><rect x="87" y="356" width="1" height="1" fill="#FF00FF"/><rect x="88" y="355" width="1" height="1" fill="#FF00FF"/><rect x="89" y="355" width="1" height="1" fill="#FF00FF"/><rect x="89" y="353" width="1" height="1" fill="#FF00FF"/><rect x="90" y="355" width="1" height="1" fill="#FF00FF"/><rect x="90" y="356" width="1" height="2" fill="#FF00FF"/><rect x="91" y="355" width="1" height="1" fill="#FF00FF"/><rect x="92" y="354" width="1" height="2" fill="#FF00FF"/><rect x="93" y="355" width="1" height="1" fill="#FF00FF"/><rect x="94" y="355" width="1" height="1" fill="#FF00FF"/><rect x="95" y="354" width="1" height="2" fill="#FF00FF"/><rect x="96" y="355" width="1" height="1" fill="#FF00FF"/><rect x="96" y="352" width="1" height="2" fill="#FF00FF"/><rect x="97" y="354" width="1" height="2" fill="#FF00FF"/><rect x="97" y="352" width="1" height="2" fill="#FF00FF"/><rect x="98" y="354" width="1" height="2" fill="#FF00FF"/><rect x="99" y="354" width="1" height="2" fill="#FF00FF"/><rect x="100" y="356" width="1" height="1" fill="#FF00FF"/><rect x="101" y="356" width="1" height="1" fill="#FF00FF"/><rect x="102" y="356" width="1" height="1" fill="#FF00FF"/><rect x="103" y="356" width="1" height="1" fill="#FF00FF"/><rect x="104" y="357" width="1" height="1" fill="#FF00FF"/><rect x="104" y="358" width="1" height="1" fill="#FF00FF"/><rect x="105" y="357" width="1" height="1" fill="#FF00FF"/><rect x="106" y="356" width="1" height="2" fill="#FF00FF"/><rect x="106" y="358" width="1" height="2" fill="#FF00FF"/><rect x="107" y="357" width="1" height="1" fill="#FF00FF"/><rect x="107" y="355" width="1" height="1" fill="#FF00FF"/><rect x="108" y="356" width="1" height="2" fill="#FF00FF"/><rect x="109" y="356" width="1" height="2" fill="#FF00FF"/><rect x="109" y="355" width="1" height="1" fill="#FF00FF"/><rect x="110" y="356" width="1" height="2" fill="#FF00FF"/><rect x="111" y="356" width="1" height="2" fill="#FF00FF"/><rect x="111" y="355" width="1" height="1" fill="#FF00FF"/><rect x="112" y="357" width="1" height="1" fill="#FF00FF"/><rect x="113" y="357" width="1" height="1" fill="#FF00FF"/><rect x="114" y="357" width="1" height="1" fill="#FF00FF"/><rect x="114" y="358" width="1" height="2" fill="#FF00FF"/><rect x="115" y="356" width="1" height="2" fill="#FF00FF"/><rect x="115" y="355" width="1" height="1" fill="#FF00FF"/><rect x="116" y="357" width="1" height="1" fill="#FF00FF"/><rect x="117" y="357" width="1" height="1" fill="#FF00FF"/><rect x="117" y="358" width="1" height="2" fill="#FF00FF"/><rect x="118" y="357" width="1" height="1" fill="#FF00FF"/><rect x="118" y="354" width="1" height="2" fill="#FF00FF"/><rect x="119" y="356" width="1" height="2" fill="#FF00FF"/><rect x="120" y="356" width="1" height="2" fill="#FF00FF"/><rect x="121" y="356" width="1" height="2" fill="#FF00FF"/><rect x="122" y="356" width="1" height="2" fill="#FF00FF"/><rect x="123" y="357" width="1" height="1" fill="#FF00FF"/><rect x="124" y="357" width="1" height="1" fill="#FF00FF"/><rect x="125" y="356" width="1" height="2" fill="#FF00FF"/><rect x="126" y="356" width="1" height="2" fill="#FF00FF"/><rect x="127" y="356" width="1" height="2" fill="#FF00FF"/><rect x="128" y="357" width="1" height="1" fill="#FF00FF"/><rect x="128" y="358" width="1" height="1" fill="#FF00FF"/><rect x="129" y="356" width="1" height="2" fill="#FF00FF"/><rect x="130" y="357" width="1" height="1" fill="#FF00FF"/><rect x="131" y="356" width="1" height="1" fill="#FF00FF"/><rect x="131" y="357" width="1" height="1" fill="#FF00FF"/><rect x="132" y="356" width="1" height="1" fill="#FF00FF"/><rect x="133" y="354" width="1" height="2" fill="#FF00FF"/><rect x="134" y="354" width="1" height="2" fill="#FF00FF"/><rect x="135" y="353" width="1" height="2" fill="#FF00FF"/><rect x="136" y="353" width="1" height="2" fill="#FF00FF"/><rect x="136" y="351" width="1" height="2" fill="#FF00FF"/><rect x="137" y="353" width="1" height="2" fill="#FF00FF"/><rect x="138" y="354" width="1" height="1" fill="#FF00FF"/><rect x="139" y="355" width="1" height="1" fill="#FF00FF"/><rect x="140" y="354" width="1" height="2" fill="#FF00FF"/><rect x="141" y="354" width="1" height="2" fill="#FF00FF"/><rect x="142" y="355" width="1" height="1" fill="#FF00FF"/><rect x="143" y="354" width="1" height="2" fill="#FF00FF"/><rect x="144" y="354" width="1" height="2" fill="#FF00FF"/><rect x="145" y="354" width="1" height="2" fill="#FF00FF"/><rect x="146" y="354" width="1" height="2" fill="#FF00FF"/><rect x="147" y="355" width="1" height="1" fill="#FF00FF"/><rect x="148" y="354" width="1" height="2" fill="#FF00FF"/><rect x="149" y="355" width="1" height="1" fill="#FF00FF"/><rect x="150" y="354" width="1" height="2" fill="#FF00FF"/><rect x="151" y="355" width="1" height="1" fill="#FF00FF"/><rect x="152" y="356" width="1" height="1" fill="#FF00FF"/><rect x="153" y="355" width="1" height="2" fill="#FF00FF"/><rect x="154" y="356" width="1" height="1" fill="#FF00FF"/><rect x="155" y="355" width="1" height="2" fill="#FF00FF"/><rect x="156" y="356" width="1" height="1" fill="#FF00FF"/><rect x="157" y="356" width="1" height="1" fill="#FF00FF"/><rect x="158" y="356" width="1" height="1" fill="#FF00FF"/><rect x="159" y="356" width="1" height="1" fill="#FF00FF"/><rect x="160" y="356" width="1" height="1" fill="#FF00FF"/><rect x="161" y="356" width="1" height="1" fill="#FF00FF"/><rect x="162" y="355" width="1" height="2" fill="#FF00FF"/><rect x="163" y="355" width="1" height="2" fill="#FF00FF"/><rect x="164" y="356" width="1" height="1" fill="#FF00FF"/><rect x="164" y="353" width="1" height="2" fill="#FF00FF"/><rect x="165" y="355" width="1" height="2" fill="#FF00FF"/><rect x="166" y="356" width="1" height="1" fill="#FF00FF"/><rect x="167" y="355" width="1" height="2" fill="#FF00FF"/><rect x="167" y="357" width="1" height="2" fill="#FF00FF"/><rect x="168" y="355" width="1" height="2" fill="#FF00FF"/><rect x="169" y="356" width="1" height="1" fill="#FF00FF"/><rect x="169" y="357" width="1" height="1" fill="#FF00FF"/><rect x="170" y="356" width="1" height="1" fill="#FF00FF"/><rect x="171" y="356" width="1" height="1" fill="#FF00FF"/><rect x="171" y="357" width="1" height="2" fill="#FF00FF"/><rect x="172" y="355" width="1" height="2" fill="#FF00FF"/><rect x="172" y="357" width="1" height="1" fill="#FF00FF"/><rect x="173" y="356" width="1" height="1" fill="#FF00FF"/><rect x="174" y="356" width="1" height="1" fill="#FF00FF"/><rect x="175" y="356" width="1" height="1" fill="#FF00FF"/><rect x="176" y="357" width="1" height="1" fill="#FF00FF"/><rect x="177" y="356" width="1" height="2" fill="#FF00FF"/><rect x="177" y="358" width="1" height="1" fill="#FF00FF"/><rect x="178" y="356" width="1" height="2" fill="#FF00FF"/><rect x="179" y="356" width="1" height="2" fill="#FF00FF"/><rect x="180" y="357" width="1" height="1" fill="#FF00FF"/><rect x="181" y="357" width="1" height="1" fill="#FF00FF"/><rect x="182" y="356" width="1" height="2" fill="#FF00FF"/><rect x="183" y="357" width="1" height="1" fill="#FF00FF"/><rect x="184" y="357" width="1" height="1" fill="#FF00FF"/><rect x="185" y="356" width="1" height="2" fill="#FF00FF"/><rect x="186" y="357" width="1" height="1" fill="#FF00FF"/><rect x="187" y="357" width="1" height="1" fill="#FF00FF"/><rect x="188" y="356" width="1" height="2" fill="#FF00FF"/><rect x="189" y="356" width="1" height="2" fill="#FF00FF"/><rect x="190" y="357" width="1" height="1" fill="#FF00FF"/><rect x="191" y="356" width="1" height="2" fill="#FF00FF"/><rect x="192" y="357" width="1" height="1" fill="#FF00FF"/><rect x="193" y="357" width="1" height="1" fill="#FF00FF"/><rect x="194" y="357" width="1" height="1" fill="#FF00FF"/><rect x="195" y="356" width="1" height="2" fill="#FF00FF"/><rect x="196" y="356" width="1" height="2" fill="#FF00FF"/><rect x="197" y="356" width="1" height="2" fill="#FF00FF"/><rect x="198" y="356" width="1" height="2" fill="#FF00FF"/><rect x="199" y="356" width="1" height="2" fill="#FF00FF"/><rect x="199" y="355" width="1" height="1" fill="#FF00FF"/><rect x="200" y="356" width="1" height="2" fill="#FF00FF"/><rect x="200" y="358" width="1" height="1" fill="#FF00FF"/><rect x="201" y="357" width="1" height="1" fill="#FF00FF"/><rect x="202" y="356" width="1" height="2" fill="#FF00FF"/><rect x="203" y="357" width="1" height="2" fill="#FF00FF"/><rect x="204" y="358" width="1" height="1" fill="#FF00FF"/><rect x="205" y="358" width="1" height="1" fill="#FF00FF"/><rect x="206" y="357" width="1" height="2" fill="#FF00FF"/><rect x="207" y="357" width="1" height="2" fill="#FF00FF"/><rect x="208" y="357" width="1" height="2" fill="#FF00FF"/><rect x="209" y="358" width="1" height="1" fill="#FF00FF"/><rect x="210" y="357" width="1" height="2" fill="#FF00FF"/><rect x="211" y="358" width="1" height="1" fill="#FF00FF"/><rect x="212" y="357" width="1" height="2" fill="#FF00FF"/><rect x="213" y="358" width="1" height="1" fill="#FF00FF"/><rect x="214" y="358" width="1" height="1" fill="#FF00FF"/><rect x="215" y="358" width="1" height="1" fill="#FF00FF"/><rect x="215" y="355" width="1" height="2" fill="#FF00FF"/><rect x="216" y="357" width="1" height="2" fill="#FF00FF"/><rect x="217" y="357" width="1" height="2" fill="#FF00FF"/><rect x="217" y="359" width="1" height="2" fill="#FF00FF"/><rect x="218" y="357" width="1" height="2" fill="#FF00FF"/><rect x="219" y="357" width="1" height="2" fill="#FF00FF"/><rect x="220" y="358" width="1" height="1" fill="#FF00FF"/><rect x="220" y="356" width="1" height="1" fill="#FF00FF"/><rect x="221" y="357" width="1" height="2" fill="#FF00FF"/><rect x="222" y="357" width="1" height="2" fill="#FF00FF"/><rect x="223" y="357" width="1" height="2" fill="#FF00FF"/><rect x="224" y="358" width="1" height="1" fill="#FF00FF"/><rect x="225" y="358" width="1" height="1" fill="#FF00FF"/><rect x="226" y="357" width="1" height="2" fill="#FF00FF"/><rect x="226" y="356" width="1" height="1" fill="#FF00FF"/><rect x="227" y="357" width="1" height="2" fill="#FF00FF"/><rect x="227" y="356" width="1" height="1" fill="#FF00FF"/><rect x="228" y="358" width="1" height="1" fill="#FF00FF"/><rect x="229" y="357" width="1" height="2" fill="#FF00FF"/><rect x="230" y="358" width="1" height="1" fill="#FF00FF"/><rect x="231" y="358" width="1" height="1" fill="#FF00FF"/><rect x="232" y="357" width="1" height="2" fill="#FF00FF"/><rect x="233" y="358" width="1" height="1" fill="#FF00FF"/><rect x="234" y="357" width="1" height="2" fill="#FF00FF"/><rect x="235" y="357" width="1" height="2" fill="#FF00FF"/><rect x="235" y="359" width="1" height="1" fill="#FF00FF"/><rect x="236" y="357" width="1" height="2" fill="#FF00FF"/><rect x="236" y="356" width="1" height="1" fill="#FF00FF"/><rect x="237" y="357" width="1" height="2" fill="#FF00FF"/><rect x="238" y="357" width="1" height="2" fill="#FF00FF"/><rect x="239" y="357" width="1" height="2" fill="#FF00FF"/><rect x="240" y="358" width="1" height="1" fill="#FF00FF"/><rect x="241" y="359" width="1" height="1" fill="#FF00FF"/><rect x="241" y="360" width="1" height="1" fill="#FF00FF"/><rect x="242" y="359" width="1" height="1" fill="#FF00FF"/><rect x="243" y="359" width="1" height="1" fill="#FF00FF"/><rect x="244" y="358" width="1" height="2" fill="#FF00FF"/><rect x="245" y="358" width="1" height="2" fill="#FF00FF"/><rect x="246" y="359" width="1" height="1" fill="#FF00FF"/><rect x="246" y="356" width="1" height="2" fill="#FF00FF"/><rect x="247" y="359" width="1" height="1" fill="#FF00FF"/><rect x="248" y="359" width="1" height="1" fill="#FF00FF"/><rect x="248" y="360" width="1" height="1" fill="#FF00FF"/><rect x="249" y="359" width="1" height="1" fill="#FF00FF"/><rect x="249" y="360" width="1" height="2" fill="#FF00FF"/><rect x="250" y="358" width="1" height="2" fill="#FF00FF"/><rect x="250" y="356" width="1" height="2" fill="#FF00FF"/><rect x="251" y="359" width="1" height="1" fill="#FF00FF"/><rect x="252" y="359" width="1" height="1" fill="#FF00FF"/><rect x="252" y="357" width="1" height="1" fill="#FF00FF"/><rect x="253" y="358" width="1" height="2" fill="#FF00FF"/><rect x="253" y="357" width="1" height="1" fill="#FF00FF"/><rect x="254" y="359" width="1" height="1" fill="#FF00FF"/><rect x="255" y="359" width="1" height="1" fill="#FF00FF"/><rect x="256" y="359" width="1" height="1" fill="#FF00FF"/><rect x="257" y="359" width="1" height="1" fill="#FF00FF"/><rect x="258" y="358" width="1" height="2" fill="#FF00FF"/><rect x="259" y="358" width="1" height="2" fill="#FF00FF"/><rect x="260" y="359" width="1" height="1" fill="#FF00FF"/><rect x="261" y="358" width="1" height="2" fill="#FF00FF"/><rect x="262" y="359" width="1" height="1" fill="#FF00FF"/><rect x="263" y="358" width="1" height="2" fill="#FF00FF"/><rect x="264" y="358" width="1" height="2" fill="#FF00FF"/><rect x="264" y="360" width="1" height="1" fill="#FF00FF"/><rect x="265" y="359" width="1" height="1" fill="#FF00FF"/><rect x="266" y="359" width="1" height="1" fill="#FF00FF"/><rect x="267" y="359" width="1" height="1" fill="#FF00FF"/><rect x="268" y="359" width="1" height="1" fill="#FF00FF"/><rect x="269" y="359" width="1" height="1" fill="#FF00FF"/><rect x="269" y="360" width="1" height="2" fill="#FF00FF"/><rect x="270" y="359" width="1" height="1" fill="#FF00FF"/><rect x="270" y="356" width="1" height="2" fill="#FF00FF"/><rect x="271" y="358" width="1" height="2" fill="#FF00FF"/><rect x="272" y="359" width="1" height="1" fill="#FF00FF"/><rect x="273" y="358" width="1" height="2" fill="#FF00FF"/><rect x="274" y="359" width="1" height="1" fill="#FF00FF"/><rect x="275" y="358" width="1" height="2" fill="#FF00FF"/><rect x="276" y="358" width="1" height="2" fill="#FF00FF"/><rect x="277" y="358" width="1" height="2" fill="#FF00FF"/><rect x="278" y="359" width="1" height="1" fill="#FF00FF"/><rect x="278" y="360" width="1" height="2" fill="#FF00FF"/><rect x="279" y="359" width="1" height="1" fill="#FF00FF"/><rect x="280" y="358" width="1" height="2" fill="#FF00FF"/><rect x="281" y="358" width="1" height="2" fill="#FF00FF"/><rect x="281" y="356" width="1" height="2" fill="#FF00FF"/><rect x="282" y="359" width="1" height="1" fill="#FF00FF"/><rect x="283" y="359" width="1" height="1" fill="#FF00FF"/><rect x="284" y="358" width="1" height="2" fill="#FF00FF"/><rect x="284" y="360" width="1" height="2" fill="#FF00FF"/><rect x="285" y="359" width="1" height="1" fill="#FF00FF"/><rect x="286" y="358" width="1" height="2" fill="#FF00FF"/><rect x="286" y="356" width="1" height="2" fill="#FF00FF"/><rect x="287" y="359" width="1" height="1" fill="#FF00FF"/><rect x="287" y="357" width="1" height="1" fill="#FF00FF"/><rect x="288" y="358" width="1" height="2" fill="#FF00FF"/><rect x="289" y="358" width="1" height="2" fill="#FF00FF"/><rect x="290" y="358" width="1" height="2" fill="#FF00FF"/><rect x="290" y="360" width="1" height="2" fill="#FF00FF"/><rect x="291" y="359" width="1" height="1" fill="#FF00FF"/><rect x="292" y="358" width="1" height="2" fill="#FF00FF"/><rect x="293" y="359" width="1" height="1" fill="#FF00FF"/><rect x="294" y="359" width="1" height="1" fill="#FF00FF"/><rect x="295" y="359" width="1" height="1" fill="#FF00FF"/><rect x="296" y="358" width="1" height="2" fill="#FF00FF"/><rect x="296" y="360" width="1" height="2" fill="#FF00FF"/><rect x="297" y="359" width="1" height="1" fill="#FF00FF"/><rect x="298" y="358" width="1" height="2" fill="#FF00FF"/><rect x="299" y="359" width="1" height="1" fill="#FF00FF"/><rect x="300" y="359" width="1" height="1" fill="#FF00FF"/><rect x="301" y="359" width="1" height="1" fill="#FF00FF"/><rect x="302" y="359" width="1" height="1" fill="#FF00FF"/><rect x="302" y="357" width="1" height="1" fill="#FF00FF"/><rect x="303" y="359" width="1" height="1" fill="#FF00FF"/><rect x="304" y="358" width="1" height="2" fill="#FF00FF"/><rect x="305" y="359" width="1" height="1" fill="#FF00FF"/><rect x="306" y="359" width="1" height="1" fill="#FF00FF"/><rect x="307" y="358" width="1" height="2" fill="#FF00FF"/><rect x="307" y="360" width="1" height="2" fill="#FF00FF"/><rect x="308" y="359" width="1" height="1" fill="#FF00FF"/><rect x="309" y="359" width="1" height="1" fill="#FF00FF"/><rect x="310" y="359" width="1" height="1" fill="#FF00FF"/><rect x="311" y="358" width="1" height="2" fill="#FF00FF"/><rect x="312" y="359" width="1" height="1" fill="#FF00FF"/><rect x="313" y="359" width="1" height="1" fill="#FF00FF"/><rect x="314" y="359" width="1" height="1" fill="#FF00FF"/><rect x="315" y="358" width="1" height="2" fill="#FF00FF"/><rect x="315" y="357" width="1" height="1" fill="#FF00FF"/><rect x="316" y="358" width="1" height="2" fill="#FF00FF"/><rect x="317" y="359" width="1" height="1" fill="#FF00FF"/><rect x="318" y="358" width="1" height="2" fill="#FF00FF"/><rect x="318" y="356" width="1" height="2" fill="#FF00FF"/><rect x="319" y="359" width="1" height="1" fill="#FF00FF"/><rect x="320" y="359" width="1" height="1" fill="#FF00FF"/><rect x="321" y="359" width="1" height="1" fill="#FF00FF"/><rect x="322" y="359" width="1" height="1" fill="#FF00FF"/><rect x="323" y="358" width="1" height="2" fill="#FF00FF"/><rect x="324" y="359" width="1" height="1" fill="#FF00FF"/><rect x="325" y="358" width="1" height="2" fill="#FF00FF"/><rect x="325" y="360" width="1" height="1" fill="#FF00FF"/><rect x="326" y="358" width="1" height="2" fill="#FF00FF"/><rect x="327" y="359" width="1" height="1" fill="#FF00FF"/><rect x="328" y="359" width="1" height="1" fill="#FF00FF"/><rect x="328" y="360" width="1" height="1" fill="#FF00FF"/><rect x="329" y="358" width="1" height="2" fill="#FF00FF"/><rect x="330" y="359" width="1" height="1" fill="#FF00FF"/><rect x="331" y="359" width="1" height="1" fill="#FF00FF"/><rect x="332" y="359" width="1" height="1" fill="#FF00FF"/><rect x="332" y="357" width="1" height="1" fill="#FF00FF"/><rect x="333" y="359" width="1" height="1" fill="#FF00FF"/><rect x="334" y="359" width="1" height="1" fill="#FF00FF"/><rect x="335" y="359" width="1" height="1" fill="#FF00FF"/><rect x="336" y="358" width="1" height="2" fill="#FF00FF"/><rect x="337" y="359" width="1" height="1" fill="#FF00FF"/><rect x="338" y="358" width="1" height="2" fill="#FF00FF"/><rect x="339" y="358" width="1" height="2" fill="#FF00FF"/><rect x="340" y="358" width="1" height="2" fill="#FF00FF"/><rect x="341" y="359" width="1" height="1" fill="#FF00FF"/><rect x="341" y="360" width="1" height="1" fill="#FF00FF"/><rect x="342" y="359" width="1" height="1" fill="#FF00FF"/><rect x="343" y="359" width="1" height="1" fill="#FF00FF"/><rect x="344" y="359" width="1" height="1" fill="#FF00FF"/><rect x="345" y="359" width="1" height="1" fill="#FF00FF"/><rect x="346" y="359" width="1" height="1" fill="#FF00FF"/><rect x="347" y="358" width="1" height="2" fill="#FF00FF"/><rect x="347" y="360" width="1" height="1" fill="#FF00FF"/><rect x="348" y="358" width="1" height="2" fill="#FF00FF"/><rect x="348" y="360" width="1" height="1" fill="#FF00FF"/><rect x="349" y="359" width="1" height="1" fill="#FF00FF"/><rect x="350" y="358" width="1" height="1" fill="#FF00FF"/><rect x="351" y="357" width="1" height="2" fill="#FF00FF"/><rect x="352" y="357" width="1" height="2" fill="#FF00FF"/><rect x="352" y="356" width="1" height="1" fill="#FF00FF"/><rect x="353" y="358" width="1" height="1" fill="#FF00FF"/><rect x="354" y="358" width="1" height="1" fill="#FF00FF"/><rect x="355" y="357" width="1" height="2" fill="#FF00FF"/><rect x="356" y="357" width="1" height="2" fill="#FF00FF"/><rect x="357" y="358" width="1" height="1" fill="#FF00FF"/><rect x="357" y="359" width="1" height="1" fill="#FF00FF"/><rect x="358" y="358" width="1" height="1" fill="#FF00FF"/><rect x="358" y="359" width="1" height="2" fill="#FF00FF"/><rect x="359" y="358" width="1" height="1" fill="#FF00FF"/><rect x="359" y="359" width="1" height="2" fill="#FF00FF"/><rect x="360" y="358" width="1" height="1" fill="#FF00FF"/><rect x="361" y="357" width="1" height="2" fill="#FF00FF"/><rect x="361" y="359" width="1" height="1" fill="#FF00FF"/><rect x="362" y="358" width="1" height="1" fill="#FF00FF"/><rect x="363" y="358" width="1" height="1" fill="#FF00FF"/><rect x="364" y="357" width="1" height="2" fill="#FF00FF"/><rect x="365" y="357" width="1" height="2" fill="#FF00FF"/><rect x="365" y="356" width="1" height="1" fill="#FF00FF"/><rect x="366" y="357" width="1" height="2" fill="#FF00FF"/><rect x="367" y="358" width="1" height="1" fill="#FF00FF"/><rect x="368" y="358" width="1" height="1" fill="#FF00FF"/><rect x="369" y="358" width="1" height="1" fill="#FF00FF"/><rect x="369" y="356" width="1" height="1" fill="#FF00FF"/><rect x="370" y="358" width="1" height="1" fill="#FF00FF"/><rect x="371" y="358" width="1" height="1" fill="#FF00FF"/><rect x="372" y="358" width="1" height="1" fill="#FF00FF"/><rect x="373" y="357" width="1" height="2" fill="#FF00FF"/><rect x="373" y="359" width="1" height="1" fill="#FF00FF"/><rect x="374" y="357" width="1" height="2" fill="#FF00FF"/><rect x="375" y="358" width="1" height="1" fill="#FF00FF"/><rect x="376" y="357" width="1" height="2" fill="#FF00FF"/><rect x="376" y="356" width="1" height="1" fill="#FF00FF"/><rect x="377" y="358" width="1" height="1" fill="#FF00FF"/><rect x="378" y="357" width="1" height="2" fill="#FF00FF"/><rect x="378" y="359" width="1" height="1" fill="#FF00FF"/><rect x="379" y="357" width="1" height="2" fill="#FF00FF"/><rect x="380" y="358" width="1" height="1" fill="#FF00FF"/><rect x="381" y="357" width="1" height="2" fill="#FF00FF"/><rect x="382" y="357" width="1" height="2" fill="#FF00FF"/><rect x="383" y="357" width="1" height="2" fill="#FF00FF"/><rect x="384" y="357" width="1" height="2" fill="#FF00FF"/><rect x="385" y="358" width="1" height="1" fill="#FF00FF"/><rect x="385" y="359" width="1" height="1" fill="#FF00FF"/><rect x="386" y="357" width="1" height="2" fill="#FF00FF"/><rect x="387" y="358" width="1" height="1" fill="#FF00FF"/><rect x="388" y="357" width="1" height="2" fill="#FF00FF"/><rect x="388" y="356" width="1" height="1" fill="#FF00FF"/><rect x="389" y="357" width="1" height="2" fill="#FF00FF"/><rect x="390" y="357" width="1" height="2" fill="#FF00FF"/><rect x="391" y="356" width="1" height="2" fill="#FF00FF"/><rect x="392" y="356" width="1" height="2" fill="#FF00FF"/><rect x="393" y="356" width="1" height="2" fill="#FF00FF"/><rect x="393" y="358" width="1" height="1" fill="#FF00FF"/><rect x="394" y="357" width="1" height="1" fill="#FF00FF"/><rect x="395" y="356" width="1" height="2" fill="#FF00FF"/><rect x="395" y="355" width="1" height="1" fill="#FF00FF"/><rect x="396" y="357" width="1" height="1" fill="#FF00FF"/><rect x="396" y="358" width="1" height="1" fill="#FF00FF"/><rect x="397" y="356" width="1" height="2" fill="#FF00FF"/><rect x="397" y="354" width="1" height="2" fill="#FF00FF"/><rect x="398" y="356" width="1" height="2" fill="#FF00FF"/><rect x="399" y="357" width="1" height="1" fill="#FF00FF"/><rect x="400" y="356" width="1" height="2" fill="#FF00FF"/><rect x="401" y="357" width="1" height="1" fill="#FF00FF"/><rect x="402" y="357" width="1" height="1" fill="#FF00FF"/><rect x="402" y="358" width="1" height="1" fill="#FF00FF"/><rect x="403" y="357" width="1" height="1" fill="#FF00FF"/><rect x="404" y="357" width="1" height="1" fill="#FF00FF"/><rect x="405" y="356" width="1" height="2" fill="#FF00FF"/><rect x="406" y="357" width="1" height="1" fill="#FF00FF"/><rect x="407" y="356" width="1" height="2" fill="#FF00FF"/><rect x="408" y="357" width="1" height="1" fill="#FF00FF"/><rect x="408" y="354" width="1" height="2" fill="#FF00FF"/><rect x="409" y="356" width="1" height="2" fill="#FF00FF"/><rect x="410" y="356" width="1" height="2" fill="#FF00FF"/><rect x="410" y="358" width="1" height="1" fill="#FF00FF"/><rect x="411" y="357" width="1" height="1" fill="#FF00FF"/><rect x="412" y="357" width="1" height="1" fill="#FF00FF"/><rect x="413" y="356" width="1" height="2" fill="#FF00FF"/><rect x="414" y="356" width="1" height="2" fill="#FF00FF"/><rect x="415" y="357" width="1" height="1" fill="#FF00FF"/><rect x="416" y="357" width="1" height="1" fill="#FF00FF"/><rect x="417" y="357" width="1" height="1" fill="#FF00FF"/><rect x="418" y="356" width="1" height="2" fill="#FF00FF"/><rect x="419" y="356" width="1" height="2" fill="#FF00FF"/><rect x="419" y="354" width="1" height="2" fill="#FF00FF"/><rect x="420" y="356" width="1" height="2" fill="#FF00FF"/><rect x="420" y="354" width="1" height="2" fill="#FF00FF"/><rect x="421" y="356" width="1" height="2" fill="#FF00FF"/><rect x="422" y="357" width="1" height="1" fill="#FF00FF"/><rect x="422" y="358" width="1" height="1" fill="#FF00FF"/><rect x="423" y="357" width="1" height="1" fill="#FF00FF"/><rect x="424" y="357" width="1" height="1" fill="#FF00FF"/><rect x="425" y="357" width="1" height="1" fill="#FF00FF"/><rect x="425" y="355" width="1" height="1" fill="#FF00FF"/><rect x="426" y="357" width="1" height="1" fill="#FF00FF"/><rect x="427" y="356" width="1" height="2" fill="#FF00FF"/><rect x="427" y="358" width="1" height="1" fill="#FF00FF"/><rect x="428" y="357" width="1" height="1" fill="#FF00FF"/><rect x="428" y="358" width="1" height="1" fill="#FF00FF"/><rect x="429" y="356" width="1" height="2" fill="#FF00FF"/><rect x="430" y="356" width="1" height="1" fill="#FF00FF"/><rect x="430" y="357" width="1" height="2" fill="#FF00FF"/><rect x="431" y="355" width="1" height="2" fill="#FF00FF"/><rect x="432" y="355" width="1" height="2" fill="#FF00FF"/><rect x="433" y="356" width="1" height="1" fill="#FF00FF"/><rect x="434" y="356" width="1" height="1" fill="#FF00FF"/><rect x="434" y="357" width="1" height="1" fill="#FF00FF"/><rect x="435" y="354" width="1" height="2" fill="#FF00FF"/><rect x="435" y="356" width="1" height="1" fill="#FF00FF"/><rect x="436" y="355" width="1" height="1" fill="#FF00FF"/><rect x="437" y="355" width="1" height="1" fill="#FF00FF"/><rect x="438" y="353" width="1" height="2" fill="#FF00FF"/><rect x="439" y="353" width="1" height="2" fill="#FF00FF"/><rect x="439" y="355" width="1" height="2" fill="#FF00FF"/><rect x="440" y="353" width="1" height="2" fill="#FF00FF"/><rect x="441" y="354" width="1" height="1" fill="#FF00FF"/><rect x="442" y="354" width="1" height="1" fill="#FF00FF"/><rect x="442" y="352" width="1" height="1" fill="#FF00FF"/><rect x="443" y="354" width="1" height="1" fill="#FF00FF"/><rect x="443" y="355" width="1" height="1" fill="#FF00FF"/><rect x="444" y="354" width="1" height="1" fill="#FF00FF"/><rect x="445" y="354" width="1" height="1" fill="#FF00FF"/><rect x="447" y="295" width="1" height="134" fill="#D8D8D8"/></svg>
<div style="position:absolute;left:491px;top:126px;width:139px;height:1px;background:#808080"></div>
<div style="position:absolute;left:491px;top:126px;width:1px;height:84px;background:#808080"></div>
<div style="position:absolute;left:491px;top:209px;width:139px;height:1px;background:#808080"></div>
<div style="position:absolute;left:629px;top:126px;width:1px;height:84px;background:#808080"></div>
<div style="position:absolute;left:492px;top:127px;width:138px;height:1px;background:#FFFFFF"></div>
<div style="position:absolute;left:492px;top:127px;width:1px;height:83px;background:#FFFFFF"></div>
<div style="position:absolute;left:491px;top:210px;width:140px;height:1px;background:#FFFFFF"></div>
<div style="position:absolute;left:630px;top:126px;width:1px;height:85px;background:#FFFFFF"></div>
<div class="t" style="left:499px;top:122px;background:#D4D0C8;padding:0 2px 0 1px">Инф. о диске</div>
<div class="t" style="left:503px;top:136px;color:#000;">Тип:</div>
<div class="t" style="left:542px;top:136px;color:#000080;">Data CD</div>
<div class="t" style="left:503px;top:153px;color:#000;">ID:</div>
<div class="t" style="left:542px;top:153px;color:#000080;">Taiyo Yuden</div>
<div class="t" style="left:503px;top:171px;color:#000;">Дата:</div>
<div class="t" style="left:542px;top:171px;color:#000080;">19 Apr 2006</div>
<div class="t" style="left:503px;top:189px;color:#000;">Метка:</div>
<div class="t" style="left:542px;top:189px;color:#000080;">Linspire</div>
<div style="position:absolute;left:491px;top:217px;width:139px;height:1px;background:#808080"></div>
<div style="position:absolute;left:491px;top:217px;width:1px;height:203px;background:#808080"></div>
<div style="position:absolute;left:491px;top:419px;width:139px;height:1px;background:#808080"></div>
<div style="position:absolute;left:629px;top:217px;width:1px;height:203px;background:#808080"></div>
<div style="position:absolute;left:492px;top:218px;width:138px;height:1px;background:#FFFFFF"></div>
<div style="position:absolute;left:492px;top:218px;width:1px;height:202px;background:#FFFFFF"></div>
<div style="position:absolute;left:491px;top:420px;width:140px;height:1px;background:#FFFFFF"></div>
<div style="position:absolute;left:630px;top:217px;width:1px;height:204px;background:#FFFFFF"></div>
<div class="t" style="left:499px;top:213px;background:#D4D0C8;padding:0 2px 0 1px">Установки</div>
<div class="t" style="left:499px;top:227px;color:#000;">Скорость:</div>
<div style="position:absolute;left:500px;top:242px;width:83px;height:21px;background:#FFFFFF"></div>
<div style="position:absolute;left:500px;top:242px;width:83px;height:1px;background:#808080"></div>
<div style="position:absolute;left:500px;top:242px;width:1px;height:21px;background:#808080"></div>
<div style="position:absolute;left:500px;top:262px;width:83px;height:1px;background:#FFFFFF"></div>
<div style="position:absolute;left:582px;top:242px;width:1px;height:21px;background:#FFFFFF"></div>
<div style="position:absolute;left:501px;top:243px;width:81px;height:1px;background:#404040"></div>
<div style="position:absolute;left:501px;top:243px;width:1px;height:19px;background:#404040"></div>
<div style="position:absolute;left:501px;top:261px;width:81px;height:1px;background:#D4D0C8"></div>
<div style="position:absolute;left:581px;top:243px;width:1px;height:19px;background:#D4D0C8"></div>
<div class="t" style="left:504px;top:247px;color:#000;">24 X</div>
<div style="position:absolute;left:566px;top:244px;width:15px;height:17px;background:#D4D0C8"></div>
<div style="position:absolute;left:566px;top:244px;width:15px;height:1px;background:#FFFFFF"></div>
<div style="position:absolute;left:566px;top:244px;width:1px;height:17px;background:#FFFFFF"></div>
<div style="position:absolute;left:566px;top:260px;width:15px;height:1px;background:#404040"></div>
<div style="position:absolute;left:580px;top:244px;width:1px;height:17px;background:#404040"></div>
<div style="position:absolute;left:567px;top:259px;width:13px;height:1px;background:#808080"></div>
<div style="position:absolute;left:579px;top:245px;width:1px;height:15px;background:#808080"></div>
<div style="position:absolute;left:592px;top:240px;width:23px;height:23px;background:#D4D0C8"></div>
<div style="position:absolute;left:592px;top:240px;width:23px;height:1px;background:#FFFFFF"></div>
<div style="position:absolute;left:592px;top:240px;width:1px;height:23px;background:#FFFFFF"></div>
<div style="position:absolute;left:592px;top:262px;width:23px;height:1px;background:#404040"></div>
<div style="position:absolute;left:614px;top:240px;width:1px;height:23px;background:#404040"></div>
<div style="position:absolute;left:593px;top:261px;width:21px;height:1px;background:#808080"></div>
<div style="position:absolute;left:613px;top:241px;width:1px;height:21px;background:#808080"></div>
<div class="t" style="left:502px;top:274px;color:#000;">Старт:</div>
<div class="t" style="left:502px;top:296px;color:#000;">Конец:</div>
<div style="position:absolute;left:554px;top:268px;width:60px;height:20px;background:#FFFFFF"></div>
<div style="position:absolute;left:554px;top:268px;width:60px;height:1px;background:#808080"></div>
<div style="position:absolute;left:554px;top:268px;width:1px;height:20px;background:#808080"></div>
<div style="position:absolute;left:554px;top:287px;width:60px;height:1px;background:#FFFFFF"></div>
<div style="position:absolute;left:613px;top:268px;width:1px;height:20px;background:#FFFFFF"></div>
<div style="position:absolute;left:555px;top:269px;width:58px;height:1px;background:#404040"></div>
<div style="position:absolute;left:555px;top:269px;width:1px;height:18px;background:#404040"></div>
<div style="position:absolute;left:555px;top:286px;width:58px;height:1px;background:#D4D0C8"></div>
<div style="position:absolute;left:612px;top:269px;width:1px;height:18px;background:#D4D0C8"></div>
<div style="position:absolute;left:554px;top:291px;width:60px;height:20px;background:#FFFFFF"></div>
<div style="position:absolute;left:554px;top:291px;width:60px;height:1px;background:#808080"></div>
<div style="position:absolute;left:554px;top:291px;width:1px;height:20px;background:#808080"></div>
<div style="position:absolute;left:554px;top:310px;width:60px;height:1px;background:#FFFFFF"></div>
<div style="position:absolute;left:613px;top:291px;width:1px;height:20px;background:#FFFFFF"></div>
<div style="position:absolute;left:555px;top:292px;width:58px;height:1px;background:#404040"></div>
<div style="position:absolute;left:555px;top:292px;width:1px;height:18px;background:#404040"></div>
<div style="position:absolute;left:555px;top:309px;width:58px;height:1px;background:#D4D0C8"></div>
<div style="position:absolute;left:612px;top:292px;width:1px;height:18px;background:#D4D0C8"></div>
<div class="t" style="left:557px;top:273px;color:#000;">00:00.00</div>
<div class="t" style="left:557px;top:295px;color:#000;">76:22.65</div>
<div style="position:absolute;left:502px;top:316px;width:13px;height:13px;background:#FFFFFF"></div>
<div style="position:absolute;left:502px;top:316px;width:13px;height:1px;background:#808080"></div>
<div style="position:absolute;left:502px;top:316px;width:1px;height:13px;background:#808080"></div>
<div style="position:absolute;left:502px;top:328px;width:13px;height:1px;background:#FFFFFF"></div>
<div style="position:absolute;left:514px;top:316px;width:1px;height:13px;background:#FFFFFF"></div>
<div style="position:absolute;left:503px;top:317px;width:11px;height:1px;background:#404040"></div>
<div style="position:absolute;left:503px;top:317px;width:1px;height:11px;background:#404040"></div>
<div style="position:absolute;left:503px;top:327px;width:11px;height:1px;background:#D4D0C8"></div>
<div style="position:absolute;left:513px;top:317px;width:1px;height:11px;background:#D4D0C8"></div>
<div class="t" style="left:521px;top:318px;color:#000;">Быстр.скан.</div>
<div style="position:absolute;left:502px;top:337px;width:13px;height:13px;background:#FFFFFF"></div>
<div style="position:absolute;left:502px;top:337px;width:13px;height:1px;background:#808080"></div>
<div style="position:absolute;left:502px;top:337px;width:1px;height:13px;background:#808080"></div>
<div style="position:absolute;left:502px;top:349px;width:13px;height:1px;background:#FFFFFF"></div>
<div style="position:absolute;left:514px;top:337px;width:1px;height:13px;background:#FFFFFF"></div>
<div style="position:absolute;left:503px;top:338px;width:11px;height:1px;background:#404040"></div>
<div style="position:absolute;left:503px;top:338px;width:1px;height:11px;background:#404040"></div>
<div style="position:absolute;left:503px;top:348px;width:11px;height:1px;background:#D4D0C8"></div>
<div style="position:absolute;left:513px;top:338px;width:1px;height:11px;background:#D4D0C8"></div>
<svg style="left:505px;top:340px" width="7" height="7" shape-rendering="crispEdges"><rect x="6" y="0" width="1" height="1" fill="#000"/><rect x="5" y="1" width="1" height="1" fill="#000"/><rect x="6" y="1" width="1" height="1" fill="#000"/><rect x="0" y="2" width="1" height="1" fill="#000"/><rect x="4" y="2" width="1" height="1" fill="#000"/><rect x="5" y="2" width="1" height="1" fill="#000"/><rect x="6" y="2" width="1" height="1" fill="#000"/><rect x="0" y="3" width="1" height="1" fill="#000"/><rect x="1" y="3" width="1" height="1" fill="#000"/><rect x="3" y="3" width="1" height="1" fill="#000"/><rect x="4" y="3" width="1" height="1" fill="#000"/><rect x="5" y="3" width="1" height="1" fill="#000"/><rect x="0" y="4" width="1" height="1" fill="#000"/><rect x="1" y="4" width="1" height="1" fill="#000"/><rect x="2" y="4" width="1" height="1" fill="#000"/><rect x="3" y="4" width="1" height="1" fill="#000"/><rect x="4" y="4" width="1" height="1" fill="#000"/><rect x="1" y="5" width="1" height="1" fill="#000"/><rect x="2" y="5" width="1" height="1" fill="#000"/><rect x="3" y="5" width="1" height="1" fill="#000"/><rect x="2" y="6" width="1" height="1" fill="#000"/></svg>
<div class="t" style="left:521px;top:339px;color:#000;">Отобр. C1/PIE</div>
<div style="position:absolute;left:502px;top:353px;width:13px;height:13px;background:#FFFFFF"></div>
<div style="position:absolute;left:502px;top:353px;width:13px;height:1px;background:#808080"></div>
<div style="position:absolute;left:502px;top:353px;width:1px;height:13px;background:#808080"></div>
<div style="position:absolute;left:502px;top:365px;width:13px;height:1px;background:#FFFFFF"></div>
<div style="position:absolute;left:514px;top:353px;width:1px;height:13px;background:#FFFFFF"></div>
<div style="position:absolute;left:503px;top:354px;width:11px;height:1px;background:#404040"></div>
<div style="position:absolute;left:503px;top:354px;width:1px;height:11px;background:#404040"></div>
<div style="position:absolute;left:503px;top:364px;width:11px;height:1px;background:#D4D0C8"></div>
<div style="position:absolute;left:513px;top:354px;width:1px;height:11px;background:#D4D0C8"></div>
<svg style="left:505px;top:356px" width="7" height="7" shape-rendering="crispEdges"><rect x="6" y="0" width="1" height="1" fill="#000"/><rect x="5" y="1" width="1" height="1" fill="#000"/><rect x="6" y="1" width="1" height="1" fill="#000"/><rect x="0" y="2" width="1" height="1" fill="#000"/><rect x="4" y="2" width="1" height="1" fill="#000"/><rect x="5" y="2" width="1" height="1" fill="#000"/><rect x="6" y="2" width="1" height="1" fill="#000"/><rect x="0" y="3" width="1" height="1" fill="#000"/><rect x="1" y="3" width="1" height="1" fill="#000"/><rect x="3" y="3" width="1" height="1" fill="#000"/><rect x="4" y="3" width="1" height="1" fill="#000"/><rect x="5" y="3" width="1" height="1" fill="#000"/><rect x="0" y="4" width="1" height="1" fill="#000"/><rect x="1" y="4" width="1" height="1" fill="#000"/><rect x="2" y="4" width="1" height="1" fill="#000"/><rect x="3" y="4" width="1" height="1" fill="#000"/><rect x="4" y="4" width="1" height="1" fill="#000"/><rect x="1" y="5" width="1" height="1" fill="#000"/><rect x="2" y="5" width="1" height="1" fill="#000"/><rect x="3" y="5" width="1" height="1" fill="#000"/><rect x="2" y="6" width="1" height="1" fill="#000"/></svg>
<div class="t" style="left:521px;top:355px;color:#000;">Отобр. C2/PIF</div>
<div style="position:absolute;left:502px;top:370px;width:13px;height:13px;background:#FFFFFF"></div>
<div style="position:absolute;left:502px;top:370px;width:13px;height:1px;background:#808080"></div>
<div style="position:absolute;left:502px;top:370px;width:1px;height:13px;background:#808080"></div>
<div style="position:absolute;left:502px;top:382px;width:13px;height:1px;background:#FFFFFF"></div>
<div style="position:absolute;left:514px;top:370px;width:1px;height:13px;background:#FFFFFF"></div>
<div style="position:absolute;left:503px;top:371px;width:11px;height:1px;background:#404040"></div>
<div style="position:absolute;left:503px;top:371px;width:1px;height:11px;background:#404040"></div>
<div style="position:absolute;left:503px;top:381px;width:11px;height:1px;background:#D4D0C8"></div>
<div style="position:absolute;left:513px;top:371px;width:1px;height:11px;background:#D4D0C8"></div>
<svg style="left:505px;top:373px" width="7" height="7" shape-rendering="crispEdges"><rect x="6" y="0" width="1" height="1" fill="#000"/><rect x="5" y="1" width="1" height="1" fill="#000"/><rect x="6" y="1" width="1" height="1" fill="#000"/><rect x="0" y="2" width="1" height="1" fill="#000"/><rect x="4" y="2" width="1" height="1" fill="#000"/><rect x="5" y="2" width="1" height="1" fill="#000"/><rect x="6" y="2" width="1" height="1" fill="#000"/><rect x="0" y="3" width="1" height="1" fill="#000"/><rect x="1" y="3" width="1" height="1" fill="#000"/><rect x="3" y="3" width="1" height="1" fill="#000"/><rect x="4" y="3" width="1" height="1" fill="#000"/><rect x="5" y="3" width="1" height="1" fill="#000"/><rect x="0" y="4" width="1" height="1" fill="#000"/><rect x="1" y="4" width="1" height="1" fill="#000"/><rect x="2" y="4" width="1" height="1" fill="#000"/><rect x="3" y="4" width="1" height="1" fill="#000"/><rect x="4" y="4" width="1" height="1" fill="#000"/><rect x="1" y="5" width="1" height="1" fill="#000"/><rect x="2" y="5" width="1" height="1" fill="#000"/><rect x="3" y="5" width="1" height="1" fill="#000"/><rect x="2" y="6" width="1" height="1" fill="#000"/></svg>
<div class="t" style="left:521px;top:372px;color:#000;">Отобр. Jitter</div>
<div style="position:absolute;left:502px;top:386px;width:13px;height:13px;background:#FFFFFF"></div>
<div style="position:absolute;left:502px;top:386px;width:13px;height:1px;background:#808080"></div>
<div style="position:absolute;left:502px;top:386px;width:1px;height:13px;background:#808080"></div>
<div style="position:absolute;left:502px;top:398px;width:13px;height:1px;background:#FFFFFF"></div>
<div style="position:absolute;left:514px;top:386px;width:1px;height:13px;background:#FFFFFF"></div>
<div style="position:absolute;left:503px;top:387px;width:11px;height:1px;background:#404040"></div>
<div style="position:absolute;left:503px;top:387px;width:1px;height:11px;background:#404040"></div>
<div style="position:absolute;left:503px;top:397px;width:11px;height:1px;background:#D4D0C8"></div>
<div style="position:absolute;left:513px;top:387px;width:1px;height:11px;background:#D4D0C8"></div>
<svg style="left:505px;top:389px" width="7" height="7" shape-rendering="crispEdges"><rect x="6" y="0" width="1" height="1" fill="#000"/><rect x="5" y="1" width="1" height="1" fill="#000"/><rect x="6" y="1" width="1" height="1" fill="#000"/><rect x="0" y="2" width="1" height="1" fill="#000"/><rect x="4" y="2" width="1" height="1" fill="#000"/><rect x="5" y="2" width="1" height="1" fill="#000"/><rect x="6" y="2" width="1" height="1" fill="#000"/><rect x="0" y="3" width="1" height="1" fill="#000"/><rect x="1" y="3" width="1" height="1" fill="#000"/><rect x="3" y="3" width="1" height="1" fill="#000"/><rect x="4" y="3" width="1" height="1" fill="#000"/><rect x="5" y="3" width="1" height="1" fill="#000"/><rect x="0" y="4" width="1" height="1" fill="#000"/><rect x="1" y="4" width="1" height="1" fill="#000"/><rect x="2" y="4" width="1" height="1" fill="#000"/><rect x="3" y="4" width="1" height="1" fill="#000"/><rect x="4" y="4" width="1" height="1" fill="#000"/><rect x="1" y="5" width="1" height="1" fill="#000"/><rect x="2" y="5" width="1" height="1" fill="#000"/><rect x="3" y="5" width="1" height="1" fill="#000"/><rect x="2" y="6" width="1" height="1" fill="#000"/></svg>
<div class="t" style="left:521px;top:388px;color:#000;">Отобр. скор. чтения</div>
<div style="position:absolute;left:502px;top:402px;width:13px;height:13px;background:#D4D0C8"></div>
<div style="position:absolute;left:502px;top:402px;width:13px;height:1px;background:#808080"></div>
<div style="position:absolute;left:502px;top:402px;width:1px;height:13px;background:#808080"></div>
<div style="position:absolute;left:502px;top:414px;width:13px;height:1px;background:#FFFFFF"></div>
<div style="position:absolute;left:514px;top:402px;width:1px;height:13px;background:#FFFFFF"></div>
<div style="position:absolute;left:503px;top:403px;width:11px;height:1px;background:#404040"></div>
<div style="position:absolute;left:503px;top:403px;width:1px;height:11px;background:#404040"></div>
<div style="position:absolute;left:503px;top:413px;width:11px;height:1px;background:#D4D0C8"></div>
<div style="position:absolute;left:513px;top:403px;width:1px;height:11px;background:#D4D0C8"></div>
<svg style="left:505px;top:405px" width="7" height="7" shape-rendering="crispEdges"><rect x="6" y="0" width="1" height="1" fill="#808080"/><rect x="5" y="1" width="1" height="1" fill="#808080"/><rect x="6" y="1" width="1" height="1" fill="#808080"/><rect x="0" y="2" width="1" height="1" fill="#808080"/><rect x="4" y="2" width="1" height="1" fill="#808080"/><rect x="5" y="2" width="1" height="1" fill="#808080"/><rect x="6" y="2" width="1" height="1" fill="#808080"/><rect x="0" y="3" width="1" height="1" fill="#808080"/><rect x="1" y="3" width="1" height="1" fill="#808080"/><rect x="3" y="3" width="1" height="1" fill="#808080"/><rect x="4" y="3" width="1" height="1" fill="#808080"/><rect x="5" y="3" width="1" height="1" fill="#808080"/><rect x="0" y="4" width="1" height="1" fill="#808080"/><rect x="1" y="4" width="1" height="1" fill="#808080"/><rect x="2" y="4" width="1" height="1" fill="#808080"/><rect x="3" y="4" width="1" height="1" fill="#808080"/><rect x="4" y="4" width="1" height="1" fill="#808080"/><rect x="1" y="5" width="1" height="1" fill="#808080"/><rect x="2" y="5" width="1" height="1" fill="#808080"/><rect x="3" y="5" width="1" height="1" fill="#808080"/><rect x="2" y="6" width="1" height="1" fill="#808080"/></svg>
<div class="t" style="left:521px;top:404px;color:#808080;text-shadow:1px 1px 0 #fff;">Отобр. скор. записи</div>
<div style="position:absolute;left:491px;top:427px;width:139px;height:1px;background:#808080"></div>
<div style="position:absolute;left:491px;top:427px;width:1px;height:26px;background:#808080"></div>
<div style="position:absolute;left:491px;top:452px;width:139px;height:1px;background:#808080"></div>
<div style="position:absolute;left:629px;top:427px;width:1px;height:26px;background:#808080"></div>
<div style="position:absolute;left:492px;top:428px;width:138px;height:1px;background:#FFFFFF"></div>
<div style="position:absolute;left:492px;top:428px;width:1px;height:25px;background:#FFFFFF"></div>
<div style="position:absolute;left:491px;top:453px;width:140px;height:1px;background:#FFFFFF"></div>
<div style="position:absolute;left:630px;top:427px;width:1px;height:27px;background:#FFFFFF"></div>
<div class="t" style="left:502px;top:436px;color:#000;">Индекс</div>
<div class="t r" style="right:20px;top:436px;color:#000080;text-align:right;">98</div>
<div style="position:absolute;left:491px;top:459px;width:139px;height:1px;background:#808080"></div>
<div style="position:absolute;left:491px;top:459px;width:1px;height:56px;background:#808080"></div>
<div style="position:absolute;left:491px;top:514px;width:139px;height:1px;background:#808080"></div>
<div style="position:absolute;left:629px;top:459px;width:1px;height:56px;background:#808080"></div>
<div style="position:absolute;left:492px;top:460px;width:138px;height:1px;background:#FFFFFF"></div>
<div style="position:absolute;left:492px;top:460px;width:1px;height:55px;background:#FFFFFF"></div>
<div style="position:absolute;left:491px;top:515px;width:140px;height:1px;background:#FFFFFF"></div>
<div style="position:absolute;left:630px;top:459px;width:1px;height:57px;background:#FFFFFF"></div>
<div class="t" style="left:502px;top:470px;color:#000;">Выполнено:</div>
<div class="t r" style="right:20px;top:470px;color:#000080;text-align:right;">100 %</div>
<div class="t" style="left:502px;top:486px;color:#000;">Положение:</div>
<div class="t r" style="right:20px;top:486px;color:#000080;text-align:right;">76:24.17</div>
<div class="t" style="left:502px;top:501px;color:#000;">Скорость:</div>
<div class="t r" style="right:20px;top:501px;color:#000080;text-align:right;">1.41 X</div>
<div style="position:absolute;left:14px;top:459px;width:146px;height:1px;background:#808080"></div>
<div style="position:absolute;left:14px;top:459px;width:1px;height:56px;background:#808080"></div>
<div style="position:absolute;left:14px;top:514px;width:146px;height:1px;background:#808080"></div>
<div style="position:absolute;left:159px;top:459px;width:1px;height:56px;background:#808080"></div>
<div style="position:absolute;left:15px;top:460px;width:145px;height:1px;background:#FFFFFF"></div>
<div style="position:absolute;left:15px;top:460px;width:1px;height:55px;background:#FFFFFF"></div>
<div style="position:absolute;left:14px;top:515px;width:147px;height:1px;background:#FFFFFF"></div>
<div style="position:absolute;left:160px;top:459px;width:1px;height:57px;background:#FFFFFF"></div>
<div style="left:23px;top:455px;width:68px;height:9px;background:#D4D0C8"></div>
<div style="position:absolute;left:24px;top:456px;width:8px;height:8px;background:#000"></div>
<div style="position:absolute;left:25px;top:457px;width:6px;height:6px;background:#00FFFF"></div>
<div class="t" style="left:36px;top:454px;color:#000;">Ошибки C1</div>
<div class="t" style="left:23px;top:470px;color:#000;">Среднее:</div>
<div class="t r" style="right:490px;top:470px;color:#000080;text-align:right;">0.04</div>
<div class="t" style="left:23px;top:485px;color:#000;">Максим.:</div>
<div class="t r" style="right:490px;top:485px;color:#000080;text-align:right;">13</div>
<div class="t" style="left:23px;top:500px;color:#000;">Итого:</div>
<div class="t r" style="right:490px;top:500px;color:#000080;text-align:right;">166</div>
<div style="position:absolute;left:172px;top:459px;width:146px;height:1px;background:#808080"></div>
<div style="position:absolute;left:172px;top:459px;width:1px;height:56px;background:#808080"></div>
<div style="position:absolute;left:172px;top:514px;width:146px;height:1px;background:#808080"></div>
<div style="position:absolute;left:317px;top:459px;width:1px;height:56px;background:#808080"></div>
<div style="position:absolute;left:173px;top:460px;width:145px;height:1px;background:#FFFFFF"></div>
<div style="position:absolute;left:173px;top:460px;width:1px;height:55px;background:#FFFFFF"></div>
<div style="position:absolute;left:172px;top:515px;width:147px;height:1px;background:#FFFFFF"></div>
<div style="position:absolute;left:318px;top:459px;width:1px;height:57px;background:#FFFFFF"></div>
<div style="left:181px;top:455px;width:68px;height:9px;background:#D4D0C8"></div>
<div style="position:absolute;left:182px;top:456px;width:8px;height:8px;background:#000"></div>
<div style="position:absolute;left:183px;top:457px;width:6px;height:6px;background:#FFFF00"></div>
<div class="t" style="left:194px;top:454px;color:#000;">ошибки C2</div>
<div class="t" style="left:181px;top:470px;color:#000;">Среднее:</div>
<div class="t r" style="right:331px;top:470px;color:#000080;text-align:right;">0.00</div>
<div class="t" style="left:181px;top:485px;color:#000;">Максим.:</div>
<div class="t r" style="right:331px;top:485px;color:#000080;text-align:right;">0</div>
<div class="t" style="left:181px;top:500px;color:#000;">Итого:</div>
<div class="t r" style="right:331px;top:500px;color:#000080;text-align:right;">0</div>
<div style="position:absolute;left:331px;top:459px;width:147px;height:1px;background:#808080"></div>
<div style="position:absolute;left:331px;top:459px;width:1px;height:42px;background:#808080"></div>
<div style="position:absolute;left:331px;top:500px;width:147px;height:1px;background:#808080"></div>
<div style="position:absolute;left:477px;top:459px;width:1px;height:42px;background:#808080"></div>
<div style="position:absolute;left:332px;top:460px;width:146px;height:1px;background:#FFFFFF"></div>
<div style="position:absolute;left:332px;top:460px;width:1px;height:41px;background:#FFFFFF"></div>
<div style="position:absolute;left:331px;top:501px;width:148px;height:1px;background:#FFFFFF"></div>
<div style="position:absolute;left:478px;top:459px;width:1px;height:43px;background:#FFFFFF"></div>
<div style="left:340px;top:455px;width:36px;height:9px;background:#D4D0C8"></div>
<div style="position:absolute;left:341px;top:456px;width:8px;height:8px;background:#000"></div>
<div style="position:absolute;left:342px;top:457px;width:6px;height:6px;background:#FF00FF"></div>
<div class="t" style="left:353px;top:454px;color:#000;">Jitter</div>
<div class="t" style="left:340px;top:470px;color:#000;">Среднее:</div>
<div class="t r" style="right:172px;top:470px;color:#000080;text-align:right;">5.30 %</div>
<div class="t" style="left:340px;top:485px;color:#000;">Максим.:</div>
<div class="t r" style="right:172px;top:485px;color:#000080;text-align:right;">5.7 %</div>
<svg style="left:5px;top:4px" width="18" height="18" viewBox="0 0 18 18">
<circle cx="8.7" cy="8.4" r="7.6" fill="#F2BE00"/>
<path d="M8.7,8.4 L2.2,4.6 A7.6,7.6 0 0 1 6.5,1.1 Z" fill="#FFF2A0"/>
<path d="M8.7,8.4 L15.2,12.2 A7.6,7.6 0 0 1 10.9,15.7 Z" fill="#FFF7B8"/>
<path d="M8.7,8.4 L8.3,15.9 A7.6,7.6 0 0 1 1.6,10.5 Z" fill="#E0A800"/>
<circle cx="11.6" cy="5.6" r="4.6" fill="#F4F4F4"/>
<path d="M9.2,2.8 L14.6,8.4" stroke="#E04020" stroke-width="1.6"/>
<circle cx="8.3" cy="7.2" r="0.9" fill="#F05030"/>
<circle cx="14.2" cy="3.8" r="0.8" fill="#F07050"/>
<circle cx="8.7" cy="8.6" r="1.4" fill="#0A246A"/>
</svg>
<div style="position:absolute;left:543px;top:6px;width:16px;height:14px;background:#D4D0C8"></div>
<div style="position:absolute;left:543px;top:6px;width:16px;height:1px;background:#FFFFFF"></div>
<div style="position:absolute;left:543px;top:6px;width:1px;height:14px;background:#FFFFFF"></div>
<div style="position:absolute;left:543px;top:19px;width:16px;height:1px;background:#404040"></div>
<div style="position:absolute;left:558px;top:6px;width:1px;height:14px;background:#404040"></div>
<div style="position:absolute;left:544px;top:18px;width:14px;height:1px;background:#808080"></div>
<div style="position:absolute;left:557px;top:7px;width:1px;height:12px;background:#808080"></div>
<div style="position:absolute;left:559px;top:6px;width:16px;height:14px;background:#D4D0C8"></div>
<div style="position:absolute;left:559px;top:6px;width:16px;height:1px;background:#404040"></div>
<div style="position:absolute;left:559px;top:6px;width:1px;height:14px;background:#404040"></div>
<div style="position:absolute;left:559px;top:19px;width:16px;height:1px;background:#FFFFFF"></div>
<div style="position:absolute;left:574px;top:6px;width:1px;height:14px;background:#FFFFFF"></div>
<div style="position:absolute;left:560px;top:7px;width:14px;height:1px;background:#808080"></div>
<div style="position:absolute;left:560px;top:7px;width:1px;height:12px;background:#808080"></div>
<div style="position:absolute;left:585px;top:6px;width:16px;height:14px;background:#D4D0C8"></div>
<div style="position:absolute;left:585px;top:6px;width:16px;height:1px;background:#FFFFFF"></div>
<div style="position:absolute;left:585px;top:6px;width:1px;height:14px;background:#FFFFFF"></div>
<div style="position:absolute;left:585px;top:19px;width:16px;height:1px;background:#404040"></div>
<div style="position:absolute;left:600px;top:6px;width:1px;height:14px;background:#404040"></div>
<div style="position:absolute;left:586px;top:18px;width:14px;height:1px;background:#808080"></div>
<div style="position:absolute;left:599px;top:7px;width:1px;height:12px;background:#808080"></div>
<div style="position:absolute;left:601px;top:6px;width:16px;height:14px;background:#D4D0C8"></div>
<div style="position:absolute;left:601px;top:6px;width:16px;height:1px;background:#FFFFFF"></div>
<div style="position:absolute;left:601px;top:6px;width:1px;height:14px;background:#FFFFFF"></div>
<div style="position:absolute;left:601px;top:19px;width:16px;height:1px;background:#404040"></div>
<div style="position:absolute;left:616px;top:6px;width:1px;height:14px;background:#404040"></div>
<div style="position:absolute;left:602px;top:18px;width:14px;height:1px;background:#808080"></div>
<div style="position:absolute;left:615px;top:7px;width:1px;height:12px;background:#808080"></div>
<div style="position:absolute;left:619px;top:6px;width:16px;height:14px;background:#D4D0C8"></div>
<div style="position:absolute;left:619px;top:6px;width:16px;height:1px;background:#FFFFFF"></div>
<div style="position:absolute;left:619px;top:6px;width:1px;height:14px;background:#FFFFFF"></div>
<div style="position:absolute;left:619px;top:19px;width:16px;height:1px;background:#404040"></div>
<div style="position:absolute;left:634px;top:6px;width:1px;height:14px;background:#404040"></div>
<div style="position:absolute;left:620px;top:18px;width:14px;height:1px;background:#808080"></div>
<div style="position:absolute;left:633px;top:7px;width:1px;height:12px;background:#808080"></div>
<svg style="left:0;top:0" width="641" height="24" shape-rendering="crispEdges">
<rect x="546" y="8" width="5" height="8" fill="#000"/><rect x="550" y="8" width="1" height="1" fill="#D4D0C8"/>
<rect x="547" y="9" width="2" height="2" fill="#E8E8E8"/><rect x="547" y="12" width="2" height="2" fill="#E8E8E8"/>
<rect x="550" y="10" width="5" height="7" fill="#000"/><rect x="554" y="10" width="1" height="1" fill="#D4D0C8"/>
<rect x="551" y="11" width="2" height="2" fill="#E8E8E8"/><rect x="551" y="14" width="2" height="2" fill="#E8E8E8"/>
<rect x="563" y="9" width="9" height="9" fill="#000"/>
<rect x="564" y="10" width="7" height="2" fill="#E0E0E0"/><rect x="567" y="10" width="1" height="2" fill="#000"/>
<rect x="564" y="13" width="1" height="4" fill="#E0E0E0"/><rect x="570" y="13" width="1" height="4" fill="#E0E0E0"/>
<rect x="566" y="15" width="1" height="1" fill="#E0E0E0"/><rect x="567" y="16" width="1" height="1" fill="#E0E0E0"/><rect x="568" y="15" width="1" height="1" fill="#E0E0E0"/>
<rect x="589" y="15" width="6" height="2" fill="#000"/>
<rect x="604" y="8" width="9" height="2" fill="#000"/><rect x="604" y="10" width="1" height="7" fill="#000"/><rect x="612" y="10" width="1" height="7" fill="#000"/><rect x="604" y="16" width="9" height="1" fill="#000"/>
<path d="M623.5,9.5 L630.5,16.5 M630.5,9.5 L623.5,16.5" stroke="#000" stroke-width="1.6" shape-rendering="auto"/>
</svg>
<svg style="left:417px;top:62px" width="7" height="4" shape-rendering="crispEdges"><path d="M0,0h7v1h-1v1h-1v1h-1v1h-1v-1h-1v-1h-1v-1h-1z" fill="#000"/></svg>
<svg style="left:570px;top:251px" width="7" height="4" shape-rendering="crispEdges"><path d="M0,0h7v1h-1v1h-1v1h-1v1h-1v-1h-1v-1h-1v-1h-1z" fill="#000"/></svg>
<svg style="left:596px;top:243px" width="14" height="16" shape-rendering="crispEdges">
<rect x="0" y="0" width="14" height="16" fill="#000"/><rect x="1" y="1" width="12" height="14" fill="#fff"/>
<rect x="3" y="5" width="1" height="3" fill="#008000"/><rect x="10" y="8" width="1" height="3" fill="#008000"/><rect x="4" y="4" width="5" height="1" fill="#008000"/><rect x="5" y="11" width="5" height="1" fill="#008000"/><rect x="6" y="2" width="1" height="5" fill="#008000"/><rect x="7" y="9" width="1" height="5" fill="#008000"/><rect x="7" y="3" width="1" height="3" fill="#008000"/><rect x="6" y="10" width="1" height="3" fill="#008000"/><rect x="3" y="4" width="1" height="1" fill="#008000"/><rect x="10" y="11" width="1" height="1" fill="#008000"/>
</svg>
<div style="left:50px;top:35px;font:bold 34px/34px 'Liberation Sans',sans-serif;color:#000;-webkit-text-stroke:0.6px #000;letter-spacing:-0.6px">nero</div>
<svg style="left:0;top:0" width="170" height="90"><path transform="translate(14.5,70) translate(0,8) skewX(-15) translate(0,-8)" d="M9,0 H2.5 Q0,0 0,2.5 V5.5 Q0,8 2.5,8 H9 V5.8 H3.2 Q2.5,5.8 2.5,5.1 V2.9 Q2.5,2.2 3.2,2.2 H9 Z" fill="#000" fill-rule="nonzero" stroke="#000" stroke-width="0.8"/><path transform="translate(25.6,70) translate(0,8) skewX(-15) translate(0,-8)" d="M1.5,0 H6.5 Q9,0 9,2.5 V5.5 Q9,8 6.5,8 H0 V3.6 H2.2 V6 H6 Q6.8,6 6.8,5.2 V2.8 Q6.8,2 6,2 H1.5 Z" fill="#000" fill-rule="nonzero" stroke="#000" stroke-width="0.8"/><path transform="translate(39.6,70) translate(0,8) skewX(-15) translate(0,-8)" d="M0,3 H2 V5 H0 Z" fill="#000" fill-rule="nonzero" stroke="#000" stroke-width="0.8"/><path transform="translate(43,70) translate(0,8) skewX(-15) translate(0,-8)" d="M1.5,0 H6.0 Q8.5,0 8.5,2.5 V5.5 Q8.5,8 6.0,8 H0 V3.6 H2.2 V6 H5.5 Q6.3,6 6.3,5.2 V2.8 Q6.3,2 5.5,2 H1.5 Z" fill="#000" fill-rule="nonzero" stroke="#000" stroke-width="0.8"/><path transform="translate(53.7,70) translate(0,8) skewX(-15) translate(0,-8)" d="M0,0 H2.3 L4.75,5.6 L7.2,0 H9.5 L6.05,8 H3.45 Z" fill="#000" fill-rule="nonzero" stroke="#000" stroke-width="0.8"/><path transform="translate(66,70) translate(0,8) skewX(-15) translate(0,-8)" d="M1.5,0 H7.5 Q10,0 10,2.5 V5.5 Q10,8 7.5,8 H0 V3.6 H2.2 V6 H7 Q7.8,6 7.8,5.2 V2.8 Q7.8,2 7,2 H1.5 Z" fill="#000" fill-rule="nonzero" stroke="#000" stroke-width="0.8"/><path transform="translate(97,70) translate(0,8) skewX(-15) translate(0,-8)" d="M8.5,0 H2.5 Q0,0 0,2.5 Q0,4.8 2.5,4.8 H5.5 Q6.3,4.8 6.3,5.4 Q6.3,6 5.5,6 H0 V8 H6.0 Q8.5,8 8.5,5.5 Q8.5,3.2 6.0,3.2 H3 Q2.2,3.2 2.2,2.6 Q2.2,2 3,2 H8.5 Z" fill="#000" fill-rule="nonzero" stroke="#000" stroke-width="0.8"/><path transform="translate(108.6,70) translate(0,8) skewX(-15) translate(0,-8)" d="M0,8 V0 H7.0 Q9.5,0 9.5,2.5 V3 Q9.5,5.4 7.0,5.4 H2.2 V8 Z M2.2,2 V3.4 H6.5 Q7.3,3.4 7.3,2.7 Q7.3,2 6.5,2 Z" fill="#000" fill-rule="evenodd" stroke="#000" stroke-width="0.8"/><path transform="translate(120.5,70) translate(0,8) skewX(-15) translate(0,-8)" d="M9.5,0 H2.5 Q0,0 0,2.5 V5.5 Q0,8 2.5,8 H9.5 V6 H3 Q2.2,6 2.2,5.2 V4.9 H8.5 V3.1 H2.2 V2.8 Q2.2,2 3,2 H9.5 Z" fill="#000" fill-rule="nonzero" stroke="#000" stroke-width="0.8"/><path transform="translate(132.7,70) translate(0,8) skewX(-15) translate(0,-8)" d="M9.5,0 H2.5 Q0,0 0,2.5 V5.5 Q0,8 2.5,8 H9.5 V6 H3 Q2.2,6 2.2,5.2 V4.9 H8.5 V3.1 H2.2 V2.8 Q2.2,2 3,2 H9.5 Z" fill="#000" fill-rule="nonzero" stroke="#000" stroke-width="0.8"/><path transform="translate(145.5,70) translate(0,8) skewX(-15) translate(0,-8)" d="M1.5,0 H7.5 Q10,0 10,2.5 V5.5 Q10,8 7.5,8 H0 V3.6 H2.2 V6 H7 Q7.8,6 7.8,5.2 V2.8 Q7.8,2 7,2 H1.5 Z" fill="#000" fill-rule="nonzero" stroke="#000" stroke-width="0.8"/><g transform="translate(88.5,74) rotate(-40)"><ellipse cx="0" cy="0" rx="8.9" ry="4.7" fill="#000"/><path d="M0.5,-0.6 Q3,-1.4 5.8,-1.6" stroke="#D4D0C8" stroke-width="0.9" fill="none"/><circle cx="-0.6" cy="0.3" r="1" fill="#D4D0C8"/></g></svg>
</body></html>
